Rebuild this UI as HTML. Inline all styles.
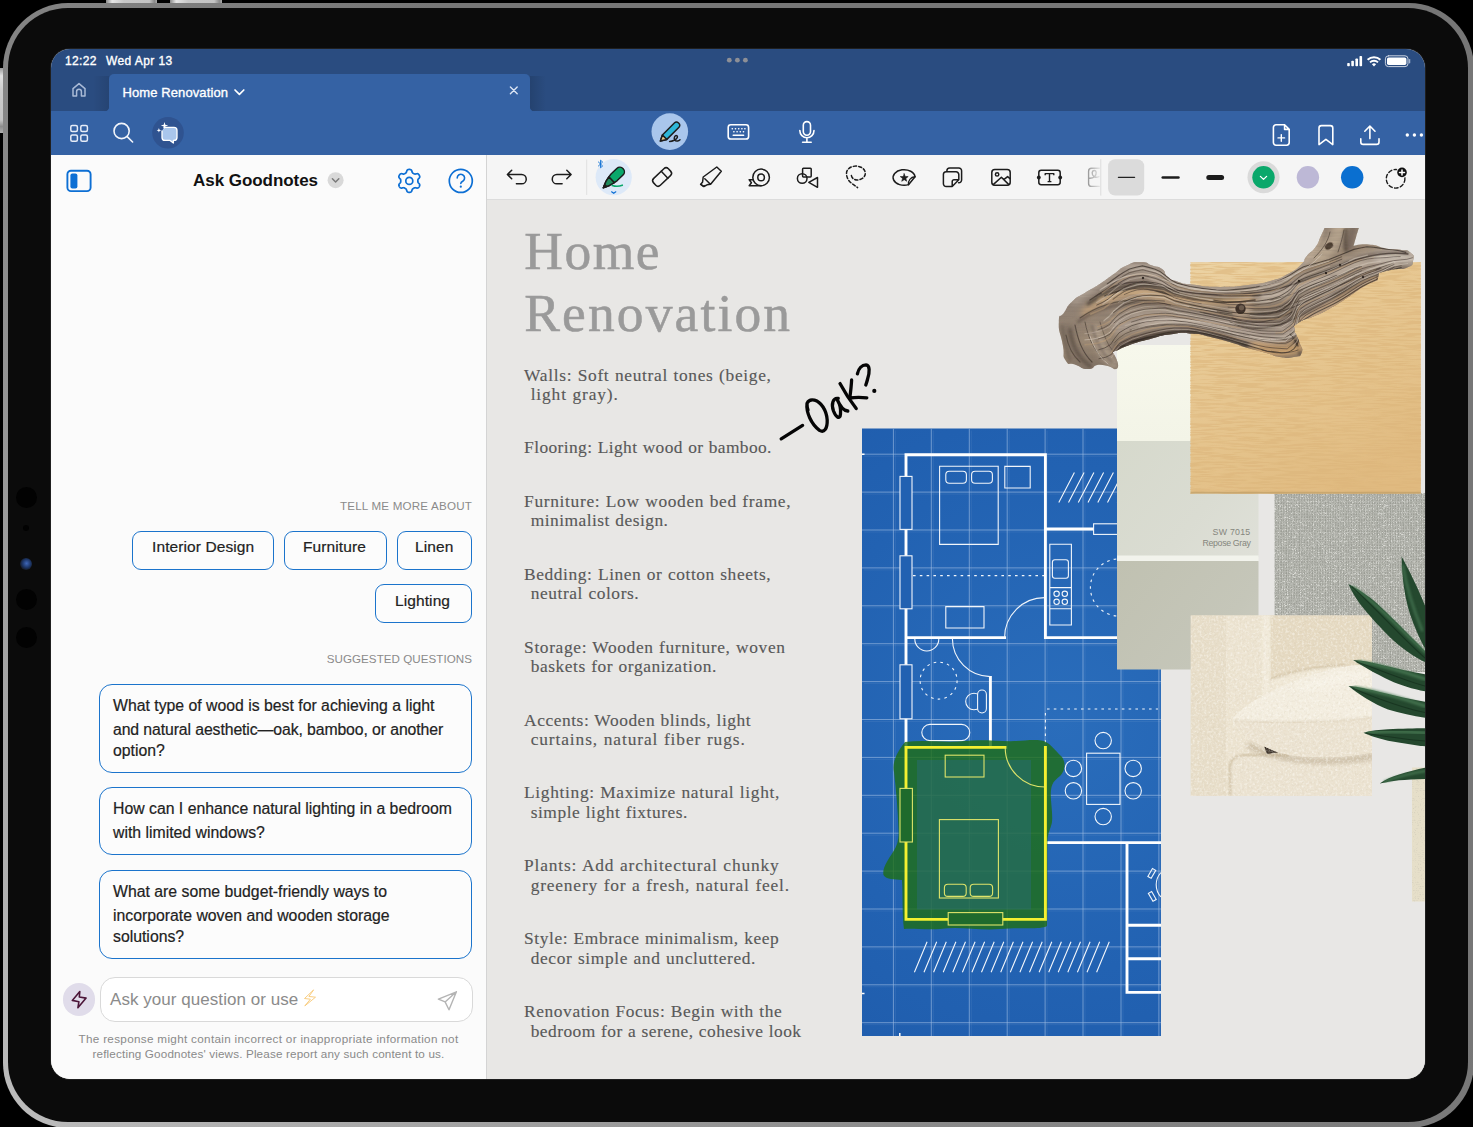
<!DOCTYPE html>
<html>
<head>
<meta charset="utf-8">
<title>Goodnotes</title>
<style>
html,body{margin:0;padding:0;overflow:hidden;}
html{width:1473px;height:1127px;background:#000;}
body{width:1473px;height:1127px;overflow:hidden;background:#000;position:relative;font-family:"Liberation Sans",sans-serif;}
.abs{position:absolute;}
#frame{left:3.100px;top:3.400px;width:1471.400px;height:1124.600px;border-radius:65px;background:linear-gradient(45deg,#bdbdbd 0%,#8a8a8a 35%,#767676 60%,#767676 100%);}
#bezel{left:8.200px;top:8.400px;width:1459.500px;height:1113.400px;border-radius:60px;background:#0b0b0b;}
.btn{background:linear-gradient(90deg,#8a8a8a,#e6e6e6 12%,#c8c8c8 35%,#c4c4c4 85%,#8a8a8a 95%,#aaa 100%);}
#screen{left:51px;top:49px;width:1374.200px;height:1030.400px;border-radius:19px;overflow:hidden;background:#e8e7e5;}
#ring{left:49.900px;top:47.900px;width:1376.400px;height:1032.600px;border-radius:20.200px;background:#1f1f1f;}
/* inside screen coords are page coords minus (51,49) -> use wrapper shift */
#sc{position:absolute;left:-51px;top:-49px;width:1473px;height:1127px;}
#status{left:51px;top:49px;width:1374px;height:62px;background:#2a4c80;}
#tab{left:109px;top:74px;width:421px;height:38px;background:#3562a4;border-radius:5px 5px 0 0;}
#bluebar{left:51px;top:111px;width:1374px;height:44px;background:#3562a4;}
#panel{left:51px;top:155px;width:435px;height:926px;background:#fbfbfb;}
#pdiv{left:486px;top:155px;width:1px;height:926px;background:#d4d4d4;}
#tools{left:487px;top:155px;width:938px;height:44px;background:#f5f5f5;border-bottom:1px solid #dcdcdc;}
#doc{left:487px;top:200px;width:939px;height:881px;background:#e8e7e5;}
.w{color:#fff;}
.sb{-webkit-text-stroke:0.35px currentColor;}
.t{position:absolute;white-space:nowrap;line-height:1;}
.chip{position:absolute;box-sizing:border-box;border:1.5px solid #1b74cc;border-radius:9px;background:#fcfcfc;height:39px;}
.q{position:absolute;box-sizing:border-box;border:1.5px solid #1b74cc;border-radius:13px;background:#fcfcfc;left:99px;width:373px;}
.lbl{font-size:11.6px;color:#8a8a8a;letter-spacing:0.05px;}
.ct{font-size:15.5px;color:#222;-webkit-text-stroke:0.2px #222;letter-spacing:0.1px;}
.qt{font-size:15.8px;color:#222;-webkit-text-stroke:0.2px #222;}
.tt{font-family:"Liberation Serif",serif;font-size:53.5px;color:#9a9a9a;-webkit-text-stroke:0.55px #9a9a9a;}
.bt{font-family:"Liberation Serif",serif;font-size:17.4px;color:#595959;word-spacing:0.5px;-webkit-text-stroke:0.15px #595959;}
</style>
</head>
<body>
<div class="abs btn" style="left:105.500px;top:0;width:51.200px;height:4px;"></div>
<div class="abs btn" style="left:170px;top:0;width:51.800px;height:4px;"></div>
<div class="abs" style="left:0;top:68.200px;width:4px;height:64.800px;background:linear-gradient(180deg,#9a9a9a,#e2e2e2 12%,#cdcdcd 35%,#c4c4c4 80%,#8c8c8c 90%,#b0b0b0 100%);"></div>
<div class="abs" id="frame"></div>
<div class="abs" id="bezel"></div>
<!-- cameras -->
<div class="abs" style="left:16px;top:487px;width:21px;height:21px;border-radius:50%;background:#020202;"></div>
<div class="abs" style="left:23px;top:525px;width:6px;height:6px;border-radius:50%;background:#020202;"></div>
<div class="abs" style="left:20px;top:558px;width:12px;height:12px;border-radius:50%;background:radial-gradient(circle at 55% 45%,#3f67b8 0,#1c3566 45%,#15171c 75%,#0b0b0b 100%);"></div>
<div class="abs" style="left:16px;top:589px;width:21px;height:21px;border-radius:50%;background:#020202;"></div>
<div class="abs" style="left:16px;top:627px;width:21px;height:21px;border-radius:50%;background:#020202;"></div>

<div class="abs" id="ring"></div>
<div class="abs" id="screen"><div id="sc">
<div class="abs" id="status"></div>
<div class="abs" style="left:530px;top:76px;width:16px;height:35px;background:linear-gradient(90deg,rgba(0,0,0,0.13),rgba(0,0,0,0));"></div>
<div class="abs" style="left:93px;top:76px;width:16px;height:35px;background:linear-gradient(270deg,rgba(0,0,0,0.10),rgba(0,0,0,0));"></div>
<div class="abs" id="tab"></div>
<div class="abs" id="bluebar"></div>
<div class="abs" id="panel"></div>
<div class="abs" id="pdiv"></div>
<div class="abs" id="tools"></div>
<div class="abs" id="doc"></div>

<!-- STATUS TEXT -->
<div class="t w sb" style="left:65px;top:54.700px;font-size:12px;letter-spacing:0.35px;">12:22</div>
<div class="t w sb" style="left:106px;top:54.700px;font-size:12px;letter-spacing:0.42px;">Wed Apr 13</div>
<div class="t w sb" style="left:122.500px;top:86px;font-size:13px;letter-spacing:0.1px;">Home Renovation</div>

<!-- PANEL TEXT -->
<div class="t" style="left:193px;top:172px;font-size:17px;font-weight:bold;color:#111;letter-spacing:-0.05px;">Ask Goodnotes</div>
<div class="t lbl" id="l1" style="right:1001px;top:499.600px;letter-spacing:0.2px;">TELL ME MORE ABOUT</div>
<div class="chip" style="left:132px;top:531px;width:142px;"></div>
<div class="chip" style="left:284px;top:531px;width:103px;"></div>
<div class="chip" style="left:397px;top:531px;width:75px;"></div>
<div class="chip" style="left:375px;top:584px;width:97px;"></div>
<div class="t ct" style="left:152px;top:539px;">Interior Design</div>
<div class="t ct" style="left:303px;top:539px;">Furniture</div>
<div class="t ct" style="left:415px;top:539px;">Linen</div>
<div class="t ct" style="left:395px;top:593px;">Lighting</div>
<div class="t lbl" id="l2" style="right:1001px;top:653.100px;">SUGGESTED QUESTIONS</div>
<div class="q" style="top:684px;height:89px;"></div>
<div class="q" style="top:787px;height:68px;"></div>
<div class="q" style="top:869.500px;height:89px;"></div>
<div class="t qt" style="left:113px;top:697.600px;">What type of wood is best for achieving a light</div>
<div class="t qt" style="left:113px;top:721.600px;letter-spacing:-0.1px;">and natural aesthetic—oak, bamboo, or another</div>
<div class="t qt" style="left:113px;top:742.600px;">option?</div>
<div class="t qt" style="left:113px;top:801px;">How can I enhance natural lighting in a bedroom</div>
<div class="t qt" style="left:113px;top:825px;">with limited windows?</div>
<div class="t qt" style="left:113px;top:884px;">What are some budget-friendly ways to</div>
<div class="t qt" style="left:113px;top:908px;">incorporate woven and wooden storage</div>
<div class="t qt" style="left:113px;top:929px;">solutions?</div>
<div class="abs" style="left:100px;top:977px;width:373px;height:45px;box-sizing:border-box;border:1px solid #d9d9d9;border-radius:15px;background:#fff;"></div>
<div class="abs" style="left:62.800px;top:983.200px;width:32.600px;height:32.600px;border-radius:50%;background:#e0dcea;"></div>
<div class="t" style="left:110px;top:990.500px;font-size:17px;color:#8b8b8b;letter-spacing:0.05px;">Ask your question or use</div>
<div class="t" style="left:0;width:537px;text-align:center;top:1032.500px;font-size:11.7px;letter-spacing:0.32px;color:#8a8a8a;">The response might contain incorrect or inappropriate information not</div>
<div class="t" style="left:0;width:537px;text-align:center;top:1047.500px;font-size:11.7px;letter-spacing:0.15px;color:#8a8a8a;">reflecting Goodnotes' views. Please report any such content to us.</div>

<!-- DOC TEXT -->
<div class="t tt" style="left:524.3px;top:224.8px;letter-spacing:1.483px;">Home</div>
<div class="t tt" style="left:524.3px;top:287.2px;letter-spacing:2.127px;">Renovation</div>

<div class="t bt" style="left:524.1px;top:366.6px;letter-spacing:0.677px;">Walls: Soft neutral tones (beige,</div>
<div class="t bt" style="left:530.7px;top:386.4px;letter-spacing:0.854px;">light gray).</div>
<div class="t bt" style="left:524.1px;top:439.3px;letter-spacing:0.402px;">Flooring: Light wood or bamboo.</div>
<div class="t bt" style="left:524.1px;top:492.7px;letter-spacing:0.664px;">Furniture: Low wooden bed frame,</div>
<div class="t bt" style="left:530.7px;top:512.4px;letter-spacing:0.486px;">minimalist design.</div>
<div class="t bt" style="left:524.1px;top:565.6px;letter-spacing:0.580px;">Bedding: Linen or cotton sheets,</div>
<div class="t bt" style="left:530.7px;top:585.3px;letter-spacing:0.573px;">neutral colors.</div>
<div class="t bt" style="left:524.1px;top:638.6px;letter-spacing:0.633px;">Storage: Wooden furniture, woven</div>
<div class="t bt" style="left:530.7px;top:658.3px;letter-spacing:0.562px;">baskets for organization.</div>
<div class="t bt" style="left:524.1px;top:711.5px;letter-spacing:0.542px;">Accents: Wooden blinds, light</div>
<div class="t bt" style="left:530.7px;top:731.2px;letter-spacing:0.882px;">curtains, natural fiber rugs.</div>
<div class="t bt" style="left:524.1px;top:784.4px;letter-spacing:0.655px;">Lighting: Maximize natural light,</div>
<div class="t bt" style="left:530.7px;top:804.1px;letter-spacing:0.538px;">simple light fixtures.</div>
<div class="t bt" style="left:524.1px;top:857.3px;letter-spacing:0.826px;">Plants: Add architectural chunky</div>
<div class="t bt" style="left:530.7px;top:877.0px;letter-spacing:0.809px;">greenery for a fresh, natural feel.</div>
<div class="t bt" style="left:524.1px;top:930.2px;letter-spacing:0.584px;">Style: Embrace minimalism, keep</div>
<div class="t bt" style="left:530.7px;top:949.9px;letter-spacing:0.627px;">decor simple and uncluttered.</div>
<div class="t bt" style="left:524.1px;top:1003.0px;letter-spacing:0.579px;">Renovation Focus: Begin with the</div>
<div class="t bt" style="left:530.7px;top:1022.7px;letter-spacing:0.464px;">bedroom for a serene, cohesive look</div>

<!-- IMAGES -->
<!-- BP START -->
<svg class="abs" style="left:0;top:0;" width="1473" height="1127" viewBox="0 0 1473 1127" fill="none">
<defs><radialGradient id="bpg" cx="1060" cy="720" r="420" gradientUnits="userSpaceOnUse"><stop offset="0" stop-color="#2a6dbb"/><stop offset="0.6" stop-color="#2262b2"/><stop offset="1" stop-color="#1f5cac"/></radialGradient>
<clipPath id="bpc"><rect x="862" y="428.5" width="299" height="607.5"/></clipPath></defs>
<rect x="862" y="428.5" width="299" height="607.5" fill="url(#bpg)"/>
<g clip-path="url(#bpc)">
<path d="M893.4 428.5 V1036 M931.3 428.5 V1036 M969.3 428.5 V1036 M1007.2 428.5 V1036 M1045.1 428.5 V1036 M1083.0 428.5 V1036 M1121.0 428.5 V1036 M1158.9 428.5 V1036 M862 454.2 H1161 M862 492.1 H1161 M862 530.0 H1161 M862 567.9 H1161 M862 605.8 H1161 M862 643.7 H1161 M862 681.6 H1161 M862 719.5 H1161 M862 757.4 H1161 M862 795.3 H1161 M862 833.2 H1161 M862 871.1 H1161 M862 909.0 H1161 M862 946.9 H1161 M862 984.8 H1161 M862 1022.7 H1161" stroke="#9dbce2" stroke-opacity="0.7" stroke-width="0.9"/>
<path d="M893.4 428.5 V1036 M931.3 428.5 V1036 M969.3 428.5 V1036 M1007.2 428.5 V1036 M1045.1 428.5 V1036 M1083.0 428.5 V1036 M1121.0 428.5 V1036 M1158.9 428.5 V1036 M862 454.2 H1161 M862 492.1 H1161 M862 530.0 H1161 M862 567.9 H1161 M862 605.8 H1161 M862 643.7 H1161 M862 681.6 H1161 M862 719.5 H1161 M862 757.4 H1161 M862 795.3 H1161 M862 833.2 H1161 M862 871.1 H1161 M862 909.0 H1161 M862 946.9 H1161 M862 984.8 H1161 M862 1022.7 H1161" stroke="#8fb2dc" stroke-opacity="0.13" stroke-width="1" transform="translate(2 2)"/>
<path d="M906 454.8 H1045.4 M906 454.8 V747 M1045.4 454.8 V637.6 M906 637.6 H1004.6 M1045.4 637.6 H1120 M1045.4 529 H1094 M990.4 677.5 V747 M1046 842.6 H1161 M1127 842.6 V992.4 H1161 M1127 925.2 H1161 M1127 958.8 H1161" stroke="#fff" stroke-width="2.9" stroke-linecap="square"/>
<rect x="900.0" y="476.4" width="12.0" height="53.0" fill="#2261b1" stroke="#f2f6fb" stroke-width="1.1"/>
<rect x="900.0" y="555.8" width="12.0" height="53.0" fill="#2261b1" stroke="#f2f6fb" stroke-width="1.1"/>
<rect x="900.0" y="664.8" width="12.0" height="54.0" fill="#2261b1" stroke="#f2f6fb" stroke-width="1.1"/>
<rect x="1093.6" y="523.8" width="24.0" height="10.6" fill="#2261b1" stroke="#f2f6fb" stroke-width="1.1"/>
<rect x="945.8" y="471.2" width="20.6" height="12.0" rx="3.5" stroke="#f2f6fb" stroke-width="1.1"/>
<rect x="971.6" y="471.2" width="20.8" height="12.0" rx="3.5" stroke="#f2f6fb" stroke-width="1.1"/>
<rect x="1052.4" y="559.8" width="16.0" height="18.4" rx="2.5" stroke="#f2f6fb" stroke-width="1.1"/>
<circle cx="1056.6" cy="593.8" r="2.700" stroke="#f2f6fb" stroke-width="1.1"/>
<circle cx="1064.8" cy="593.8" r="2.700" stroke="#f2f6fb" stroke-width="1.1"/>
<circle cx="1056.6" cy="601.8" r="2.700" stroke="#f2f6fb" stroke-width="1.1"/>
<circle cx="1064.8" cy="601.8" r="2.700" stroke="#f2f6fb" stroke-width="1.1"/>
<circle cx="974" cy="701.500" r="8.300" stroke="#f2f6fb" stroke-width="1.1"/>
<rect x="977.600" y="690" width="8.800" height="23" rx="4.400" fill="#2262b2" stroke="#f2f6fb" stroke-width="1.1"/>
<rect x="921.8" y="724.4" width="48.0" height="16.2" rx="8.1" stroke="#f2f6fb" stroke-width="1.1"/>
<path d="M939.6 466.2 H998.2 V544.4 H939.6 Z M1004.8 466.4 H1030.2 V488.0 H1004.8 Z M945.8 606.6 H984.0 V628.0 H945.8 Z M1049.8 544.2 H1071.4 V625.0 H1049.8 Z M1049.8 587.6 H1071.4 M1049.800 608.8 H1071.4 M1058.8 502.4 L1074.4 472.6 M1068.5 502.4 L1084.1 472.6 M1078.3 502.4 L1093.9 472.6 M1088.0 502.4 L1103.6 472.6 M1097.8 502.4 L1113.4 472.6 M1107.5 502.4 L1123.1 472.6 M1117.3 502.4 L1132.9 472.6 M1004.6 637.6 A40 40 0 0 1 1044.6 597.6 M952.4 638.6 A38 38 0 0 0 990.4 676.6 M914.8 639 A12 12 0 0 0 938.800 639" stroke="#f2f6fb" stroke-width="1.1"/>
<path d="M913 575.600 H1044" stroke="#f2f6fb" stroke-width="1.1" stroke-dasharray="2.600 4.200"/>
<circle cx="938.600" cy="680.600" r="18.500" stroke="#f2f6fb" stroke-width="1.1" stroke-dasharray="2.600 4.200"/>
<circle cx="1119" cy="587.500" r="28.600" stroke="#f2f6fb" stroke-width="1.1" stroke-dasharray="2.600 4.200"/>
<path d="M1047 709 H1158 M1045.400 713 V750" stroke="#f2f6fb" stroke-width="1.1" stroke-dasharray="2.600 4.200"/>
<path d="M905 742 C925 739.500 945 743 965 741 C985 739 1005 742.500 1025 740.500 C1035 739.500 1042 740 1046 742 C1050 744 1054 749 1062 757 C1066 763 1065 770 1061 775 C1057 779 1052 781 1051 790 C1050 800 1053 812 1052 822 C1051 828 1048 832 1047.500 840 C1047 860 1048 900 1047 926 C1040 930 1020 927 1000 929 C980 931 960 926 940 929 C925 930 912 928 904 929 C902 915 903 895 902 880 C895 879 886 880 883.500 875 C882 868 888 860 893 852 C897 846 899 840 898.500 830 C898 810 896 790 894 772 C892 762 897 752 905 742Z" fill="#1e6e14" fill-opacity="0.800"/>
<rect x="917" y="760" width="114" height="149.500" fill="#2d6992" fill-opacity="0.350"/>
<path d="M906 747.400 H1005 M906 747.400 V919.400 H1045.400 V747.400" stroke="#f4f031" stroke-width="2.900" stroke-linecap="square"/>
<path d="M1005.200 747.400 A39.600 39.600 0 0 0 1044.800 787" stroke="#dfe46a" stroke-width="1.100"/>
<rect x="900" y="788.400" width="12.400" height="53.600" fill="#1e6a2c" stroke="#dfe46a" stroke-width="1.100"/>
<rect x="948.200" y="912.600" width="54.600" height="12.400" fill="#1e6a2c" stroke="#dfe46a" stroke-width="1.100"/>
<rect x="945.200" y="755.200" width="38.800" height="21.800" stroke="#dfe46a" stroke-width="1.100"/>
<rect x="939.400" y="819.600" width="59" height="78.400" stroke="#dfe46a" stroke-width="1.100"/>
<rect x="944.400" y="884.200" width="21.800" height="12.200" rx="3.500" stroke="#dfe46a" stroke-width="1.100"/>
<rect x="970.200" y="884.200" width="22.400" height="12.200" rx="3.500" stroke="#dfe46a" stroke-width="1.100"/>
<rect x="1086.600" y="753.200" width="33.400" height="51.200" stroke="#f2f6fb" stroke-width="1.1"/>
<circle cx="1103.2" cy="740.6" r="8.200" stroke="#f2f6fb" stroke-width="1.1"/>
<circle cx="1103.2" cy="816.6" r="8.200" stroke="#f2f6fb" stroke-width="1.1"/>
<circle cx="1073.4" cy="768.4" r="8.200" stroke="#f2f6fb" stroke-width="1.1"/>
<circle cx="1073.4" cy="790.8" r="8.200" stroke="#f2f6fb" stroke-width="1.1"/>
<circle cx="1133.2" cy="768.4" r="8.200" stroke="#f2f6fb" stroke-width="1.1"/>
<circle cx="1133.2" cy="790.8" r="8.200" stroke="#f2f6fb" stroke-width="1.1"/>
<path d="M914.4 972.2 L927.1 941.8 M924.0 972.2 L936.7 941.8 M933.6 972.2 L946.3 941.8 M943.2 972.2 L955.9 941.8 M952.8 972.2 L965.5 941.8 M962.4 972.2 L975.1 941.8 M971.9 972.2 L984.6 941.8 M981.5 972.2 L994.2 941.8 M991.1 972.2 L1003.8 941.8 M1000.7 972.2 L1013.4 941.8 M1010.3 972.2 L1023.0 941.8 M1019.9 972.2 L1032.6 941.8 M1029.5 972.2 L1042.2 941.8 M1039.1 972.2 L1051.8 941.8 M1048.7 972.2 L1061.4 941.8 M1058.2 972.2 L1071.0 941.8 M1067.8 972.2 L1080.5 941.8 M1077.4 972.2 L1090.1 941.8 M1087.0 972.2 L1099.7 941.8 M1096.6 972.2 L1109.3 941.8" stroke="#f2f6fb" stroke-width="1.1"/>
<g stroke="#f2f6fb" stroke-width="1.1"><rect x="-1.900" y="-4.600" width="3.800" height="9.200" transform="translate(1151.800 873.400) rotate(30)"/><rect x="-1.900" y="-4.600" width="3.800" height="9.200" transform="translate(1152.300 896.400) rotate(-30)"/><path d="M1161 872.500 A18 18 0 0 0 1161 897"/></g>
<path d="M862 993.600 H864.500 M899.800 1033 V1036 M862 454.200 H864.500" stroke="#fff" stroke-width="1.500"/>
</g></svg>
<!-- BP END -->
<!-- IMGS START -->
<svg class="abs" style="left:0;top:0;" width="1473" height="1127" viewBox="0 0 1473 1127" fill="none">
<defs>
<filter id="fGrain" x="0" y="0" width="100%" height="100%"><feTurbulence type="fractalNoise" baseFrequency="0.042 0.55" numOctaves="2" seed="7" result="n"/><feColorMatrix in="n" type="matrix" values="0 0 0 0 0.72  0 0 0 0 0.47  0 0 0 0 0.2  6.5 0 0 0 -2.85"/></filter>
<filter id="fGrain2" x="0" y="0" width="100%" height="100%"><feTurbulence type="fractalNoise" baseFrequency="0.008 0.04" numOctaves="2" seed="3" result="n"/><feColorMatrix in="n" type="matrix" values="0 0 0 0 0.8  0 0 0 0 0.56  0 0 0 0 0.28  2.4 0 0 0 -1.1"/></filter>
<filter id="fLinen" x="0" y="0" width="100%" height="100%"><feTurbulence type="turbulence" baseFrequency="0.55 0.75" numOctaves="2" seed="11" result="n"/><feColorMatrix in="n" type="matrix" values="0 0 0 0 1  0 0 0 0 1  0 0 0 0 0.97  2.2 0 0 0 -0.55"/></filter>
<filter id="fLinenD" x="0" y="0" width="100%" height="100%"><feTurbulence type="turbulence" baseFrequency="0.7 0.5" numOctaves="2" seed="5" result="n"/><feColorMatrix in="n" type="matrix" values="0 0 0 0 0.3  0 0 0 0 0.3  0 0 0 0 0.28  1.8 0 0 0 -0.5"/></filter>
<filter id="fBoucle" x="0" y="0" width="100%" height="100%"><feTurbulence type="fractalNoise" baseFrequency="0.42" numOctaves="2" seed="4" result="n"/><feColorMatrix in="n" type="matrix" values="0 0 0 0 1  0 0 0 0 0.99  0 0 0 0 0.95  2.4 0 0 0 -1.05"/></filter>
<filter id="fBoucleD" x="0" y="0" width="100%" height="100%"><feTurbulence type="fractalNoise" baseFrequency="0.38" numOctaves="2" seed="9" result="n"/><feColorMatrix in="n" type="matrix" values="0 0 0 0 0.62  0 0 0 0 0.54  0 0 0 0 0.4  1.8 0 0 0 -0.95"/></filter>
<filter id="blur2"><feGaussianBlur stdDeviation="2"/></filter>
<filter id="blur4"><feGaussianBlur stdDeviation="4"/></filter>
<filter id="blur1"><feGaussianBlur stdDeviation="0.8"/></filter>
<linearGradient id="gCream" x1="0" y1="345" x2="0" y2="441" gradientUnits="userSpaceOnUse"><stop offset="0" stop-color="#f7f8ec"/><stop offset="1" stop-color="#f3f4e7"/></linearGradient>
<linearGradient id="gSw2" x1="1117" y1="441" x2="1258" y2="557" gradientUnits="userSpaceOnUse"><stop offset="0" stop-color="#d6d9cc"/><stop offset="0.6" stop-color="#dadcd2"/><stop offset="1" stop-color="#dfe0d8"/></linearGradient>
<linearGradient id="gSw3" x1="1117" y1="561" x2="1258" y2="669" gradientUnits="userSpaceOnUse"><stop offset="0" stop-color="#c0c1b1"/><stop offset="0.7" stop-color="#c5c6b9"/><stop offset="1" stop-color="#cbcbc0"/></linearGradient>
<linearGradient id="gOak" x1="1200" y1="262" x2="1330" y2="494" gradientUnits="userSpaceOnUse"><stop offset="0" stop-color="#ecd3a4"/><stop offset="0.3" stop-color="#e8ca96"/><stop offset="0.7" stop-color="#e4c28a"/><stop offset="1" stop-color="#e0ba80"/></linearGradient>
<pattern id="pWeave" width="2.600" height="2.800" patternUnits="userSpaceOnUse"><rect width="3" height="3" fill="#abada5"/><rect x="0" y="0" width="1.300" height="3" fill="#bbbcb5"/><rect x="0" y="0" width="3" height="1.100" fill="#b4b5ae" opacity="0.700"/><rect x="1.300" y="1.100" width="1.300" height="1.700" fill="#989a92"/></pattern>
<clipPath id="cCush"><rect x="1190.800" y="615.500" width="181.200" height="180.200"/></clipPath>
<clipPath id="cScr"><rect x="1040" y="200" width="385" height="879"/></clipPath>
</defs>
<rect x="1117" y="345" width="141" height="97" fill="url(#gCream)"/>
<rect x="1117" y="441" width="141.500" height="116" fill="url(#gSw2)"/>
<rect x="1117" y="555.500" width="141.500" height="6" fill="#f2f3ec"/>
<rect x="1117" y="561" width="141.500" height="108.500" fill="url(#gSw3)"/>
<rect x="1274.500" y="493" width="150.500" height="179" fill="url(#pWeave)"/>
<rect x="1274.500" y="493" width="150.500" height="179" filter="url(#fLinen)" opacity="0.6"/>
<rect x="1274.500" y="493" width="150.500" height="179" filter="url(#fLinenD)" opacity="0.6"/>
<rect x="1190.600" y="262.200" width="230.200" height="231.400" fill="url(#gOak)"/>
<rect x="1190.600" y="262.200" width="230.200" height="231.400" filter="url(#fGrain)" opacity="0.6"/>
<rect x="1190.600" y="262.200" width="230.200" height="231.400" filter="url(#fGrain2)" opacity="0.4"/>
<rect x="1190.600" y="491.800" width="230.200" height="1.800" fill="#b99a63" opacity="0.6"/>
<rect x="1412" y="767.500" width="13" height="134" fill="#e6dfc9"/>
<rect x="1412" y="767.500" width="13" height="134" filter="url(#fLinenD)" opacity="0.25"/>
<g clip-path="url(#cCush)">
<rect x="1190" y="615" width="183" height="182" fill="#eae0cc"/>
<rect x="1190" y="615" width="36" height="182" fill="#e7ddc8"/>
<rect x="1226" y="615" width="45" height="182" fill="#ece3d0"/>
<path d="M1225.600 615 V796" stroke="#cfc0a4" stroke-width="1.600" filter="url(#blur1)"/>
<path d="M1229 615 V796" stroke="#f6f0e2" stroke-width="2.500" opacity="0.800" filter="url(#blur1)"/>
<path d="M1270.500 615 H1373 V672 C1340 664 1300 672 1271 690 Z" fill="#e5d9c1"/>
<path d="M1272 615 V690" stroke="#bfae90" stroke-width="2.400" filter="url(#blur1)"/>
<path d="M1262 615 H1269.500 V700 H1262Z" fill="#f3ecdc" opacity="0.800" filter="url(#blur1)"/>
<path d="M1271 679 C1290 672 1315 667 1345 665 L1300 692 L1271 705Z" fill="#f0e8d6"/>
<path d="M1271 679 C1290 672 1315 667 1345 665" stroke="#cdbd9f" stroke-width="1.600" filter="url(#blur1)"/>
<path d="M1230 796 V766 C1231 758 1236 755 1246 755 L1373 753 V797Z" fill="#ebe2d0"/>
<path d="M1230 796 V766 C1231 758 1236 755 1246 755 L1290 755" stroke="#cbbb9d" stroke-width="1.800" filter="url(#blur1)"/>
<path d="M1250 742 C1280 760 1330 762 1373 753 V760 C1330 767 1285 766 1246 748Z" fill="#b3a286" opacity="0.550" filter="url(#blur2)"/>
<path d="M1264 746 L1278 752.500 L1267 754Z" fill="#3d332a"/>
<path d="M1232 719.500 C1246 700 1290 680 1335 668 C1350 665 1364 664 1373 665 V752 C1345 758 1310 758 1290 755 C1266 750 1238 735 1232 719.500Z" fill="#f3eddf"/>
<path d="M1233 720.500 C1270 723 1330 723 1373 717 V752 C1345 758 1310 758 1290 755 C1266 750 1238 735 1233 720.500Z" fill="#ebe2d0"/>
<path d="M1233 720.500 C1270 723 1330 723 1373 717" stroke="#d9ccb4" stroke-width="1.200" filter="url(#blur1)"/>
<path d="M1300 690 C1320 682 1345 676 1373 673" stroke="#faf6ec" stroke-width="9" opacity="0.600" filter="url(#blur4)"/>
<rect x="1190" y="615" width="183" height="182" filter="url(#fBoucle)" opacity="0.5"/>
<rect x="1190" y="615" width="183" height="182" filter="url(#fBoucleD)" opacity="0.4"/>
</g>
</svg>
<!-- IMGS END -->

<!-- DRIFT START -->
<svg class="abs" style="left:0;top:0;" width="1473" height="1127" viewBox="0 0 1473 1127" fill="none" stroke-linecap="round">
<defs><clipPath id="cDrift"><path d="M1058.8 322.2 C1059.3 311.3 1059.6 319.4 1064.2 312.3 C1068.8 305.2 1065.6 307.5 1072.7 300.9 C1079.8 294.3 1076.5 298.1 1085.5 292.4 C1094.5 286.7 1090.2 290.1 1099.7 283.9 C1109.2 277.7 1104.9 280.1 1113.9 273.9 C1122.9 267.7 1117.6 269.4 1126.6 265.4 C1135.6 261.4 1132.3 261.9 1140.8 261.9 C1149.3 261.9 1145.1 263.0 1152.2 265.4 C1159.3 267.8 1156.9 265.2 1162.1 269.0 C1167.3 272.8 1162.6 272.6 1167.8 276.8 C1173.0 281.0 1169.7 279.1 1177.8 281.7 C1185.9 284.3 1177.8 282.9 1192.0 284.6 C1206.2 286.3 1200.5 286.9 1220.3 286.9 C1240.1 286.9 1233.9 286.8 1251.3 284.6 C1268.7 282.4 1260.8 283.6 1272.6 280.3 C1284.4 277.0 1277.3 279.8 1286.8 274.6 C1296.3 269.4 1294.4 270.8 1301.0 264.7 C1307.6 258.6 1301.9 261.9 1306.6 256.2 C1311.3 250.5 1310.5 254.2 1315.2 247.6 C1319.9 241.0 1317.7 242.8 1320.8 236.3 C1323.9 229.8 1324.4 228.1 1324.4 228.1 C1324.4 228.1 1358.9 228.1 1358.9 228.1 C1358.9 228.1 1358.1 230.3 1356.3 236.3 C1354.5 242.3 1353.5 246.2 1353.5 246.2 C1353.5 246.2 1358.2 243.8 1369.1 244.5 C1380.0 245.2 1375.7 246.6 1386.1 248.4 C1396.5 250.2 1392.2 248.4 1400.3 249.8 C1408.4 251.2 1406.0 249.1 1410.3 252.6 C1414.6 256.1 1414.1 255.4 1413.1 260.4 C1412.1 265.4 1414.0 264.4 1407.4 267.5 C1400.8 270.6 1402.7 267.7 1393.2 269.6 C1383.7 271.5 1379.0 273.2 1379.0 273.2 C1379.0 273.2 1377.6 280.3 1377.6 280.3 C1377.6 280.3 1372.4 282.0 1364.8 286.0 C1357.2 290.0 1362.0 287.7 1354.9 292.4 C1347.8 297.1 1352.1 294.8 1343.6 300.2 C1335.1 305.6 1338.9 303.5 1329.4 308.7 C1319.9 313.9 1325.6 311.1 1315.2 315.8 C1304.8 320.5 1305.0 318.2 1298.1 322.9 C1291.2 327.6 1295.1 325.7 1294.6 330.0 C1294.1 334.3 1295.0 331.4 1296.7 335.7 C1298.4 340.0 1297.9 337.1 1299.6 342.8 C1301.3 348.5 1303.6 348.0 1301.7 352.7 C1299.8 357.4 1301.2 355.6 1293.9 357.0 C1286.6 358.4 1289.2 358.4 1279.7 357.0 C1270.2 355.6 1277.3 356.0 1265.5 352.7 C1253.7 349.4 1254.5 350.1 1244.2 347.0 C1233.9 343.9 1244.8 346.6 1234.5 343.5 C1224.2 340.4 1227.4 341.1 1213.2 337.8 C1199.0 334.5 1206.2 334.8 1192.0 333.6 C1177.8 332.4 1184.9 332.4 1170.7 334.3 C1156.5 336.2 1163.1 335.7 1149.4 339.2 C1135.7 342.7 1140.4 341.1 1129.5 344.9 C1118.6 348.7 1122.4 348.2 1116.7 350.6 C1111.0 353.0 1112.5 352.0 1112.5 352.0 C1112.5 352.0 1117.6 359.1 1118.1 364.8 C1118.6 370.5 1113.9 369.0 1113.9 369.0 C1113.9 369.0 1108.2 364.8 1099.7 364.8 C1091.2 364.8 1096.4 369.0 1088.3 369.0 C1080.2 369.0 1083.1 367.6 1075.5 364.8 C1067.9 362.0 1069.8 367.1 1065.6 360.5 C1061.4 353.9 1065.1 357.7 1062.8 344.9 C1060.5 332.1 1058.3 333.1 1058.8 322.2Z"/></clipPath>
<linearGradient id="gDrift" x1="1060" y1="250" x2="1100" y2="370" gradientUnits="userSpaceOnUse"><stop offset="0" stop-color="#9c8f83"/><stop offset="0.45" stop-color="#8f8073"/><stop offset="0.75" stop-color="#9a8874"/><stop offset="1" stop-color="#7d6e60"/></linearGradient>
<filter id="fDrift" x="0" y="0" width="100%" height="100%"><feTurbulence type="fractalNoise" baseFrequency="0.02 0.35" numOctaves="3" seed="2" result="n"/><feColorMatrix in="n" type="matrix" values="0 0 0 0 0.2  0 0 0 0 0.16  0 0 0 0 0.13  2.2 0 0 0 -0.9"/></filter>
<filter id="b15"><feGaussianBlur stdDeviation="1.5"/></filter><filter id="b3"><feGaussianBlur stdDeviation="3"/></filter><filter id="b06"><feGaussianBlur stdDeviation="0.6"/></filter>
</defs>
<g clip-path="url(#cDrift)">
<rect x="1050" y="220" width="375" height="160" fill="url(#gDrift)"/>
<g filter="url(#b3)">
<path d="M1075 300 C1105 275 1130 262 1150 268 C1165 274 1180 284 1220 290 C1260 290 1295 275 1312 255" stroke="#b5a79a" stroke-width="9" opacity="0.800"/>
<path d="M1085 312 C1110 295 1130 290 1160 296 C1200 305 1230 300 1262 296" stroke="#c7a47c" stroke-width="7"/>
<path d="M1262 296 C1290 292 1320 280 1345 268 C1365 258 1390 255 1410 256" stroke="#b9aa9b" stroke-width="14"/>
<path d="M1380 258 C1395 256 1405 257 1412 259" stroke="#cfc4b8" stroke-width="12"/>
<path d="M1120 325 C1160 312 1200 318 1240 330 C1270 338 1290 335 1330 305" stroke="#ab9c8f" stroke-width="18"/>
<path d="M1118 350 C1140 338 1165 332 1195 332" stroke="#5b4e45" stroke-width="9"/>
<path d="M1068 330 C1070 345 1075 358 1090 366" stroke="#857668" stroke-width="14"/>
<path d="M1095 330 C1098 345 1104 356 1114 364" stroke="#b5a492" stroke-width="9"/>
<path d="M1255 346 C1275 352 1290 352 1300 346" stroke="#c49c6c" stroke-width="11"/>
<path d="M1300 322 C1330 308 1355 292 1378 278" stroke="#c2a079" stroke-width="6"/>
<path d="M1340 228 C1336 240 1328 250 1318 258" stroke="#b8a68f" stroke-width="14"/>
<path d="M1352 228 C1350 236 1349 242 1349 248" stroke="#6f6156" stroke-width="7"/>
<circle cx="1241" cy="309" r="10" fill="#b8a087"/>
</g>
<g filter="url(#b15)">
<path d="M1088 304 C1112 286 1136 281 1160 289 C1192 300 1228 300 1260 295" stroke="#3b312a" stroke-width="3.2" opacity="0.75"/>
<path d="M1078 322 C1100 306 1126 301 1152 304 C1182 309 1212 316 1234 318" stroke="#4a3e35" stroke-width="2.6" opacity="0.6"/>
<path d="M1236 322 C1256 332 1276 328 1298 316 C1322 304 1350 288 1378 274" stroke="#463a32" stroke-width="2.6" opacity="0.65"/>
<path d="M1264 292 C1292 286 1322 272 1352 260 C1372 252 1394 251 1408 253" stroke="#4a3e35" stroke-width="2.4" opacity="0.6"/>
<path d="M1122 348 C1142 338 1166 333 1196 333 C1215 334 1232 340 1246 345" stroke="#40352d" stroke-width="5.5" opacity="0.8"/>
<path d="M1070 330 C1072 346 1078 358 1090 366" stroke="#4a3e35" stroke-width="4" opacity="0.55"/>
<path d="M1092 326 C1096 342 1102 354 1112 362" stroke="#4a3e35" stroke-width="2.5" opacity="0.5"/>
<path d="M1062 326 C1064 338 1066 350 1070 360" stroke="#5a4d43" stroke-width="3" opacity="0.5"/>
<path d="M1346 230 C1345 238 1345 244 1346 250" stroke="#4e4138" stroke-width="4" opacity="0.7"/>
<path d="M1292 332 C1295 340 1298 348 1300 354" stroke="#3b312a" stroke-width="2.5" opacity="0.7"/>
<path d="M1100 300 C1125 290 1145 290 1165 296 C1195 304 1225 302 1250 298" stroke="#cfae84" stroke-width="3" opacity="0.85"/>
<path d="M1150 278 C1168 288 1190 292 1225 293" stroke="#c4b6a8" stroke-width="3" opacity="0.7"/>
<path d="M1128 268 C1140 266 1150 270 1160 276" stroke="#b3a598" stroke-width="4" opacity="0.7"/>
<path d="M1140 326 C1170 318 1205 322 1235 334 C1260 342 1282 340 1296 332" stroke="#bcae9f" stroke-width="4" opacity="0.7"/>
<path d="M1296 306 C1326 294 1358 276 1398 264" stroke="#c6b9ab" stroke-width="4" opacity="0.7"/>
<path d="M1322 232 C1320 242 1314 252 1306 260" stroke="#c4b098" stroke-width="4" opacity="0.7"/>
<path d="M1258 350 C1274 354 1290 353 1299 348" stroke="#cfa673" stroke-width="4" opacity="0.8"/>
<path d="M1304 320 C1332 306 1356 292 1376 280" stroke="#c9a47a" stroke-width="2.5" opacity="0.7"/>
</g>
<g stroke="#3d332c" filter="url(#b06)">
<path d="M1090 300 C1115 282 1135 278 1160 286 C1190 296 1230 296 1262 292 C1290 288 1320 274 1350 262 C1370 254 1392 252 1408 254" stroke-width="1.3" opacity="0.75"/>
<path d="M1105 296 C1125 287 1140 286 1160 292 C1195 303 1225 305 1255 300" stroke-width="1.6" opacity="0.8"/>
<path d="M1080 318 C1100 304 1125 298 1150 301 C1180 306 1210 312 1232 314" stroke-width="1.1" opacity="0.6"/>
<path d="M1250 314 C1275 318 1300 305 1330 290 C1350 280 1368 274 1380 268" stroke-width="1.2" opacity="0.7"/>
<path d="M1232 318 C1250 326 1272 322 1292 312" stroke-width="1.5" opacity="0.8"/>
<path d="M1230 322 C1250 332 1270 330 1296 318" stroke-width="1.0" opacity="0.6"/>
<path d="M1200 312 C1215 316 1225 318 1236 320" stroke-width="1.1" opacity="0.6"/>
<path d="M1130 330 C1160 322 1190 322 1225 332 C1250 340 1275 342 1296 338" stroke-width="1.0" opacity="0.5"/>
<path d="M1270 300 C1300 294 1330 280 1360 266" stroke-width="0.9" opacity="0.55"/>
<path d="M1280 308 C1310 298 1340 284 1370 272" stroke-width="0.9" opacity="0.5"/>
<path d="M1075 325 C1078 340 1082 352 1092 362" stroke-width="1.2" opacity="0.7"/>
<path d="M1085 322 C1088 338 1094 350 1104 360" stroke-width="1.0" opacity="0.6"/>
<path d="M1066 335 C1068 346 1072 355 1080 362" stroke-width="1.2" opacity="0.6"/>
<path d="M1100 322 C1104 336 1108 346 1114 352" stroke-width="0.9" opacity="0.5"/>
<path d="M1120 346 C1140 338 1160 334 1185 334" stroke-width="1.4" opacity="0.7"/>
<path d="M1330 232 C1328 242 1322 250 1314 258" stroke-width="1.0" opacity="0.6"/>
<path d="M1344 230 C1342 240 1340 246 1338 252" stroke-width="1.0" opacity="0.6"/>
<path d="M1290 334 C1294 338 1296 342 1298 346" stroke-width="1.2" opacity="0.7"/>
<path d="M1262 350 C1275 354 1288 354 1298 350" stroke-width="1.0" opacity="0.6"/>
</g>
<g filter="url(#b06)">
<path d="M1107.3 283.9 Q1112.6 279.9 1118.0 276.0 Q1123.6 272.1 1129.6 269.0 Q1136.0 267.1 1142.4 265.9 Q1148.8 267.4 1155.1 269.2 Q1161.4 271.2 1165.8 275.8 Q1170.6 280.1 1176.7 283.1 Q1183.1 285.0 1189.7 286.6 Q1196.3 287.7 1203.0 288.5 Q1209.7 289.3 1216.4 290.0 Q1223.0 290.4 1229.7 290.0 Q1236.3 289.5 1242.8 288.9 Q1249.4 288.2 1255.9 287.1 Q1262.4 285.6 1268.9 284.2 Q1275.2 282.3 1281.3 279.7 Q1287.2 277.2 1292.5 273.4 Q1297.8 269.7 1303.6 266.8 Q1309.9 265.1 1316.3 263.3 Q1322.7 261.4 1329.1 259.5 Q1335.3 257.1 1341.5 254.6 Q1347.7 252.0 1353.8 249.4 Q1360.4 248.0 1366.9 246.7 Q1373.4 247.0 1379.9 248.1 Q1386.3 249.4 1392.9 249.8 Q1399.5 250.5 1405.9 252.4" stroke="#2f2621" stroke-width="1.1" opacity="0.70"/>
<path d="M1129.6 271.2 Q1136.1 269.3 1142.6 268.2 Q1149.0 269.7 1155.3 271.4 Q1161.6 273.4 1166.1 278.0 Q1171.1 282.3 1177.2 285.2 Q1183.7 287.1 1190.3 288.6 Q1197.0 289.8 1203.6 290.5 Q1210.3 291.2 1217.0 291.9 Q1223.6 292.2 1230.2 291.8 Q1236.8 291.2 1243.3 290.7 Q1249.9 290.1 1256.5 289.1 Q1263.0 287.8 1269.5 286.6 Q1275.9 284.8 1282.0 282.2 Q1287.7 279.6 1292.8 275.8 Q1297.9 272.0 1303.7 269.1 Q1310.1 267.2 1316.4 265.3 Q1322.8 263.3 1329.2 261.2" stroke="#d9cdbf" stroke-width="1.1" opacity="0.55"/>
<path d="M1096.4 295.7 Q1102.2 292.4 1107.6 288.3 Q1112.7 283.9 1118.1 279.7 Q1123.7 275.7 1129.7 272.6 Q1136.2 270.7 1142.7 269.7 Q1149.1 271.3 1155.5 273.1 Q1161.8 275.2 1166.4 279.7 Q1171.4 283.9 1177.6 286.7 Q1184.1 288.6 1190.7 290.1 Q1197.4 291.1 1204.0 291.8 Q1210.7 292.4 1217.3 293.0 Q1223.9 293.2 1230.5 292.8 Q1237.1 292.3 1243.7 291.8 Q1250.3 291.4 1256.9 290.5 Q1263.4 289.4 1270.1 288.4 Q1276.4 286.7 1282.5 284.2 Q1288.1 281.5 1293.0 277.6 Q1297.9 273.7 1303.8 270.7 Q1310.1 268.6 1316.5 266.5 Q1322.9 264.4 1329.2 262.1 Q1335.4 259.5 1341.6 256.8" stroke="#4a3d34" stroke-width="1.1" opacity="0.60"/>
<path d="M1102.2 292.9 Q1107.6 289.3 1112.8 285.5 Q1118.2 281.9 1123.8 278.5 Q1129.8 275.9 1136.4 274.4 Q1142.9 273.4 1149.3 274.7 Q1155.7 276.1 1162.0 277.6 Q1166.7 281.4 1171.7 285.0 Q1177.7 287.3 1184.2 288.9 Q1190.7 290.1 1197.4 291.1 Q1204.1 291.9 1210.8 292.7 Q1217.5 293.7 1224.2 294.4 Q1231.0 294.5 1237.7 294.6 Q1244.4 294.6 1251.2 294.5 Q1257.8 293.8 1264.4 292.7 Q1270.9 291.5 1277.1 289.2 Q1283.1 286.1 1288.4 282.7 Q1293.1 278.3 1298.0 274.0 Q1303.8 270.8 1310.1 268.6 Q1316.5 266.6 1322.9 264.7 Q1329.3 262.8 1335.5 260.5" stroke="#b99b78" stroke-width="1.2" opacity="0.55"/>
<path d="M1118.2 283.6 Q1123.8 279.9 1129.9 277.3 Q1136.4 275.9 1143.0 275.2 Q1149.4 276.8 1155.9 278.6 Q1162.3 280.4 1167.1 284.4 Q1172.3 288.0 1178.5 290.3 Q1185.0 291.9 1191.6 293.1 Q1198.2 293.9 1204.8 294.4 Q1211.4 294.9 1218.1 295.5 Q1224.7 295.9 1231.4 295.8 Q1238.1 295.7 1244.8 295.7 Q1251.5 295.8 1258.3 295.4 Q1265.0 294.8 1271.7 294.2 Q1278.0 292.3 1284.0 289.5 Q1289.1 286.2 1293.5 281.8 Q1298.1 277.4 1304.0 274.0 Q1310.3 271.5 1316.6 269.1 Q1323.0 266.8 1329.4 264.4 Q1335.6 261.8 1341.8 259.2" stroke="#3a2f29" stroke-width="0.9" opacity="0.65"/>
<path d="M1096.7 302.4 Q1102.6 299.1 1107.9 295.0 Q1112.9 290.3 1118.2 286.1 Q1123.9 282.3 1130.0 279.5 Q1136.5 278.0 1143.1 277.2 Q1149.6 278.7 1156.0 280.3 Q1162.5 282.1 1167.4 286.0 Q1172.7 289.6 1178.9 292.0 Q1185.5 293.5 1192.1 294.8 Q1198.7 295.7 1205.4 296.3 Q1212.0 296.8 1218.6 297.4 Q1225.3 297.8 1231.9 297.7 Q1238.6 297.6 1245.3 297.6 Q1252.0 297.6 1258.8 297.2 Q1265.5 296.6 1272.2 296.1 Q1278.5 294.2 1284.5 291.4 Q1289.4 288.1 1293.7 283.6 Q1298.2 279.2 1304.1 275.9 Q1310.4 273.4 1316.7 271.0 Q1323.1 268.6 1329.5 266.2" stroke="#c9bcae" stroke-width="1.2" opacity="0.50"/>
<path d="M1096.8 305.1 Q1102.8 302.6 1108.2 299.1 Q1113.1 294.9 1118.3 290.9 Q1124.1 287.3 1130.2 284.5 Q1136.7 282.6 1143.3 281.3 Q1149.8 282.1 1156.3 283.0 Q1162.7 284.0 1167.6 287.4 Q1172.9 290.6 1179.1 292.8" stroke="#2f2621" stroke-width="0.9" opacity="0.70"/>
<path d="M1213.0 300.1 Q1219.8 301.1 1226.5 301.9 Q1233.2 302.0 1239.9 302.0 Q1246.5 301.9 1253.2 301.7 Q1259.8 301.0 1266.4 299.9 Q1273.0 299.0 1279.2 296.5 Q1285.1 293.4 1289.8 289.9 Q1293.9 285.4 1298.3 281.1 Q1304.2 278.1 1310.5 275.9 Q1316.9 273.8 1323.3 271.7 Q1329.7 269.5 1335.9 266.9 Q1342.1 264.1 1348.3 261.1" stroke="#2f2621" stroke-width="0.9" opacity="0.70"/>
<path d="M1102.9 304.0 Q1108.3 300.5 1113.1 296.3 Q1118.4 292.5 1124.1 289.1 Q1130.2 286.4 1136.8 284.8 Q1143.4 283.7 1150.0 284.5 Q1156.5 285.4 1162.9 286.3 Q1167.9 289.4 1173.3 292.4 Q1179.5 294.3 1186.1 295.7 Q1192.7 297.0 1199.4 298.1 Q1206.2 299.0 1213.0 300.1" stroke="#d9cdbf" stroke-width="1.2" opacity="0.55"/>
<path d="M1246.7 302.6 Q1253.4 302.6 1260.1 302.2 Q1266.9 301.6 1273.6 301.1 Q1279.9 299.0 1285.8 296.0 Q1290.3 292.5 1294.2 288.0 Q1298.4 283.6 1304.3 280.3 Q1310.6 277.8 1317.0 275.4 Q1323.4 272.9 1329.7 270.4 Q1335.9 267.5 1342.1 264.5 Q1348.3 261.5 1354.4 258.6 Q1360.9 256.7 1367.4 255.1" stroke="#d9cdbf" stroke-width="1.2" opacity="0.55"/>
<path d="M1113.2 299.3 Q1118.4 295.1 1124.2 291.5 Q1130.3 288.5 1136.9 286.6 Q1143.5 285.1 1150.0 285.7 Q1156.6 286.4 1163.0 287.3 Q1168.1 290.5 1173.5 293.5 Q1179.9 295.6 1186.5 297.2 Q1193.2 298.7 1200.0 299.9 Q1206.8 301.0 1213.6 302.2 Q1220.4 303.3 1227.2 304.3 Q1234.0 304.6 1240.7 304.9 Q1247.4 305.1 1254.1 305.1 Q1260.8 304.4 1267.4 303.5 Q1274.0 302.5 1280.1 299.8 Q1285.9 296.4 1290.3 292.5 Q1294.2 287.8 1298.4 283.3 Q1304.3 280.2 1310.6 277.9 Q1317.0 275.8 1323.4 273.7 Q1329.8 271.5 1336.0 268.9 Q1342.2 266.1 1348.4 263.2 Q1354.5 260.3 1361.0 258.2" stroke="#4a3d34" stroke-width="1.2" opacity="0.60"/>
<path d="M1090.9 314.1 Q1097.0 311.4 1103.2 308.8 Q1108.5 305.1 1113.3 300.7 Q1118.4 296.7 1124.2 293.4 Q1130.4 290.9 1137.0 289.4 Q1143.7 288.4 1150.3 289.2 Q1156.8 290.0 1163.4 290.8 Q1168.6 293.6 1174.1 296.3 Q1180.5 297.9 1187.0 299.2 Q1193.7 300.4 1200.4 301.4 Q1207.2 302.2 1213.9 303.2 Q1220.7 304.3 1227.5 305.3 Q1234.3 305.8 1241.1 306.4 Q1247.9 307.0 1254.8 307.5 Q1261.6 307.4 1268.4 306.9 Q1275.1 306.3 1281.1 303.6 Q1286.9 300.0 1291.0 295.7 Q1294.5 290.5 1298.5 285.6 Q1304.4 282.1 1310.7 279.4 Q1317.0 277.0 1323.5 274.7 Q1329.8 272.4 1336.1 269.8 Q1342.3 267.1 1348.5 264.4 Q1354.6 261.6 1361.1 259.7" stroke="#b99b78" stroke-width="1.6" opacity="0.55"/>
<path d="M1124.3 294.5 Q1130.4 291.6 1137.1 289.8 Q1143.7 288.7 1150.3 289.6 Q1156.9 290.6 1163.5 291.8 Q1168.8 294.9 1174.5 297.9 Q1181.0 299.9 1187.6 301.4 Q1194.4 302.8 1201.2 303.8" stroke="#3a2f29" stroke-width="0.8" opacity="0.65"/>
<path d="M1228.1 307.2 Q1234.8 307.5 1241.5 307.8 Q1248.3 308.3 1255.1 308.7 Q1262.0 308.7 1268.8 308.4 Q1275.7 308.2 1281.8 305.9 Q1287.6 302.6 1291.5 298.6 Q1294.8 293.5 1298.6 288.6 Q1304.5 285.1 1310.8 282.3 Q1317.2 279.6 1323.6 277.0 Q1330.0 274.3 1336.2 271.4 Q1342.4 268.4 1348.5 265.4 Q1354.7 262.4 1361.1 260.5 Q1367.6 258.7 1374.2 258.2 Q1380.6 257.9 1386.9 257.5 Q1393.4 256.6 1400.2 256.6" stroke="#3a2f29" stroke-width="0.8" opacity="0.65"/>
<path d="M1118.5 302.2 Q1124.4 298.8 1130.6 296.2 Q1137.3 294.5 1143.9 293.2 Q1150.6 293.5 1157.2 293.9 Q1163.7 294.4 1169.1 296.8 Q1174.8 299.2 1181.2 300.8 Q1187.8 302.1 1194.6 303.4 Q1201.4 304.5 1208.2 305.6 Q1215.0 306.8 1221.9 308.1 Q1228.7 309.3 1235.5 310.0 Q1242.4 310.7 1249.2 311.4 Q1256.0 311.9 1262.8 311.7 Q1269.6 311.1 1276.3 310.5 Q1282.2 307.5 1287.9 303.7 Q1291.6 299.1 1294.9 293.8 Q1298.6 288.8 1304.6 285.4 Q1310.9 282.8 1317.2 280.3 Q1323.7 278.1 1330.1 275.8" stroke="#c9bcae" stroke-width="1.0" opacity="0.50"/>
<path d="M1124.5 301.9 Q1130.7 298.9 1137.4 296.9 Q1144.1 295.2 1150.7 295.3 Q1157.3 295.6 1163.9 296.0 Q1169.4 298.4 1175.1 300.9 Q1181.7 302.6 1188.4 304.1 Q1195.2 305.7 1202.1 307.0 Q1209.0 308.3 1215.9 309.6 Q1222.7 310.9 1229.5 312.0 Q1236.3 312.7 1243.1 313.2 Q1249.8 313.7 1256.6 313.9 Q1263.3 313.5 1270.1 312.9 Q1276.8 312.2 1282.7 309.2 Q1288.4 305.5 1292.0 301.1 Q1295.1 295.9 1298.7 291.1 Q1304.7 287.9 1311.0 285.4 Q1317.4 283.0 1323.8 280.8 Q1330.2 278.3 1336.5 275.5" stroke="#2f2621" stroke-width="1.1" opacity="0.70"/>
<path d="M1103.9 320.8 Q1109.2 316.7 1113.6 311.3 Q1118.6 306.5 1124.5 302.6 Q1130.7 299.4 1137.4 297.5 Q1144.1 296.1 1150.8 296.5 Q1157.4 297.1 1164.1 297.8 Q1169.7 300.5 1175.6 303.0 Q1182.2 304.8 1189.0 306.3 Q1195.8 307.8 1202.7 309.0 Q1209.5 310.0 1216.3 311.1" stroke="#d9cdbf" stroke-width="1.2" opacity="0.55"/>
<path d="M1250.3 315.5 Q1257.2 316.3 1264.2 316.5 Q1271.1 316.4 1277.9 316.2 Q1283.8 313.2 1289.5 309.3 Q1292.7 304.5 1295.4 298.8 Q1298.8 293.5 1304.8 289.8 Q1311.1 286.8 1317.4 284.1 Q1323.9 281.5 1330.2 279.0 Q1336.5 276.1 1342.7 273.3 Q1348.8 270.3 1355.0 267.3 Q1361.4 265.1 1367.9 263.1 Q1374.5 262.1 1380.8 261.2" stroke="#d9cdbf" stroke-width="1.2" opacity="0.55"/>
<path d="M1113.6 312.7 Q1118.7 308.4 1124.6 305.0 Q1130.8 302.4 1137.6 301.0 Q1144.3 299.9 1151.0 300.3 Q1157.7 300.7 1164.4 301.1" stroke="#4a3d34" stroke-width="1.1" opacity="0.60"/>
<path d="M1189.3 307.3 Q1196.1 308.7 1203.0 310.0 Q1209.9 311.3 1216.8 312.8 Q1223.7 314.2 1230.6 315.5 Q1237.4 316.5 1244.3 317.4 Q1251.1 318.2 1257.9 318.7 Q1264.7 318.5 1271.5 318.1 Q1278.3 317.6 1284.2 314.3 Q1289.8 310.3 1292.9 305.4 Q1295.6 299.8 1298.9 294.7 Q1304.9 291.3 1311.1 288.6 Q1317.5 286.1 1324.0 283.7 Q1330.4 281.3 1336.6 278.5 Q1342.9 275.5 1349.0 272.3 Q1355.1 269.1 1361.4 266.6" stroke="#4a3d34" stroke-width="1.1" opacity="0.60"/>
<path d="M1097.7 326.8 Q1104.1 325.1 1109.4 321.6 Q1113.8 316.6 1118.7 312.2 Q1124.7 308.6 1131.0 305.7 Q1137.7 303.8 1144.4 302.1 Q1151.1 301.9 1157.8 301.8 Q1164.5 301.8 1170.2 303.6 Q1176.2 305.6 1182.8 306.9 Q1189.6 308.3 1196.4 309.8 Q1203.3 311.1 1210.2 312.5 Q1217.1 313.9 1224.0 315.4 Q1230.9 316.7 1237.8 317.7 Q1244.6 318.6 1251.4 319.4 Q1258.2 319.9 1265.1 319.7 Q1271.9 319.3 1278.7 318.8 Q1284.5 315.5 1290.1 311.4" stroke="#b99b78" stroke-width="1.4" opacity="0.55"/>
<path d="M1311.2 290.0 Q1317.6 287.2 1324.0 284.7 Q1330.4 282.1 1336.7 279.2 Q1342.9 276.3 1349.0 273.2 Q1355.2 270.1 1361.5 267.7" stroke="#b99b78" stroke-width="1.4" opacity="0.55"/>
<path d="M1097.8 330.0 Q1104.3 328.2 1109.6 324.4 Q1113.8 319.1 1118.8 314.3 Q1124.7 310.4 1131.0 307.2 Q1137.8 305.1 1144.5 303.3 Q1151.2 303.1 1157.9 303.0 Q1164.6 303.2 1170.4 305.2" stroke="#3a2f29" stroke-width="0.8" opacity="0.65"/>
<path d="M1203.8 312.8 Q1210.7 314.0 1217.5 315.3 Q1224.4 316.6 1231.3 318.0 Q1238.2 319.1 1245.1 320.3 Q1252.0 321.5 1258.9 322.4 Q1265.9 322.7 1272.8 322.7 Q1279.7 322.6 1285.6 319.3 Q1291.1 315.1 1293.8 309.8 Q1296.0 303.8 1299.1 298.3 Q1305.0 294.6 1311.3 291.5 Q1317.7 288.7 1324.1 286.1 Q1330.5 283.5 1336.8 280.6 Q1343.0 277.6 1349.1 274.5 Q1355.2 271.3 1361.6 268.8 Q1368.1 266.6 1374.7 265.3 Q1381.0 263.8 1387.2 262.1 Q1393.6 260.3 1400.5 259.9 Q1407.1 259.8 1412.5 257.8" stroke="#3a2f29" stroke-width="0.8" opacity="0.65"/>
<path d="M1084.8 333.7 Q1091.3 333.1 1097.9 331.5 Q1104.4 329.9 1109.7 326.4 Q1113.9 321.3 1118.8 316.8 Q1124.8 313.3 1131.2 310.4 Q1137.9 308.4 1144.7 306.7 Q1151.4 306.2 1158.2 305.9 Q1164.9 305.7 1170.8 307.2 Q1176.9 308.9 1183.6 310.0 Q1190.4 311.3 1197.3 312.8 Q1204.2 314.1 1211.2 315.6 Q1218.1 317.1 1225.0 318.6 Q1231.9 320.1 1238.8 321.2 Q1245.7 322.3 1252.5 323.2 Q1259.3 323.9 1266.2 323.9 Q1273.1 323.6 1279.9 323.2 Q1285.7 319.7 1291.2 315.5 Q1293.9 310.3 1296.1 304.5 Q1299.1 299.2 1305.1 295.7 Q1311.4 292.9 1317.8 290.3 Q1324.2 287.9 1330.6 285.3 Q1336.9 282.3 1343.1 279.2" stroke="#c9bcae" stroke-width="1.0" opacity="0.50"/>
<path d="M1114.0 322.9 Q1118.9 318.5 1124.9 315.1 Q1131.2 312.4 1138.0 310.6 Q1144.8 309.1 1151.6 308.7 Q1158.4 308.3 1165.1 308.0 Q1171.1 309.2 1177.3 310.7 Q1184.0 311.6 1190.8 312.7 Q1197.6 314.0 1204.6 315.3 Q1211.5 316.6 1218.4 318.1 Q1225.3 319.6 1232.3 321.2 Q1239.2 322.5 1246.1 323.7 Q1253.0 324.9 1259.9 325.9 Q1266.8 326.0 1273.8 326.0 Q1280.6 325.8 1286.4 322.2 Q1291.9 317.8 1294.3 312.3 Q1296.3 306.3 1299.2 300.7 Q1305.2 297.1 1311.4 294.1 Q1317.8 291.4 1324.3 288.8 Q1330.7 286.2 1337.0 283.3 Q1343.2 280.2 1349.3 277.0 Q1355.4 273.7 1361.7 270.9" stroke="#2f2621" stroke-width="0.7" opacity="0.70"/>
<path d="M1084.9 339.9 Q1091.4 339.6 1098.1 338.0 Q1104.8 336.2 1110.0 332.2 Q1114.1 326.4 1118.9 321.3 Q1124.9 317.3 1131.3 314.1 Q1138.1 312.0 1144.9 310.3 Q1151.7 309.9 1158.5 309.7 Q1165.3 309.7 1171.4 311.3 Q1177.8 313.0 1184.6 314.2 Q1191.6 315.6 1198.5 317.1 Q1205.5 318.5 1212.5 319.8 Q1219.3 321.2 1226.2 322.5 Q1233.0 323.7 1239.8 324.6 Q1246.6 325.5 1253.4 326.3 Q1260.2 327.0 1267.2 327.1 Q1274.1 327.2 1281.1 327.3 Q1286.9 324.1 1292.5 320.2 Q1294.8 315.0 1296.7 309.3 Q1299.3 304.0 1305.4 300.6 Q1311.6 297.5 1318.0 294.6 Q1324.5 291.8 1330.8 288.8 Q1337.1 285.4 1343.3 281.9 Q1349.4 278.2 1355.5 274.6 Q1361.7 271.6 1368.2 269.1 Q1374.8 267.4 1381.1 265.7 Q1387.3 263.7 1393.7 261.8 Q1400.7 261.4 1407.3 261.1" stroke="#d9cdbf" stroke-width="1.0" opacity="0.55"/>
<path d="M1098.2 339.0 Q1104.9 337.6 1110.1 334.1 Q1114.2 328.8 1119.0 324.3 Q1125.1 320.9 1131.5 318.2 Q1138.3 316.5 1145.1 314.8 Q1152.0 314.1 1158.8 313.5 Q1165.6 312.9 1171.8 313.7 Q1178.2 314.8 1185.0 315.5 Q1191.8 316.6 1198.8 317.9 Q1205.7 319.1 1212.7 320.6 Q1219.6 322.1 1226.6 323.8 Q1233.5 325.4 1240.5 326.9 Q1247.4 328.4 1254.3 329.7 Q1261.3 330.9 1268.3 331.2 Q1275.3 331.3 1282.2 331.3 Q1287.9 327.5 1293.3 323.0 Q1295.2 317.1 1296.8 310.8 Q1299.4 305.0 1305.4 301.4 Q1311.6 298.2 1318.0 295.3 Q1324.5 292.7 1330.9 289.9 Q1337.2 286.9 1343.4 283.7 Q1349.5 280.3 1355.6 276.9 Q1361.9 273.9 1368.4 271.3 Q1375.0 269.5 1381.3 267.3 Q1387.4 264.9 1393.8 262.6" stroke="#4a3d34" stroke-width="1.0" opacity="0.60"/>
<path d="M1084.9 344.8 Q1091.6 344.7 1098.4 343.0 Q1105.1 341.3 1110.3 337.1 Q1114.2 331.1 1119.0 325.9 Q1125.1 322.0 1131.5 318.9 Q1138.3 316.9 1145.1 315.2 Q1152.0 314.7 1158.9 314.5 Q1165.7 314.3 1172.1 315.5 Q1178.6 316.9 1185.6 317.8 Q1192.6 319.1 1199.5 320.6 Q1206.5 321.9 1213.5 323.2 Q1220.3 324.5 1227.2 325.8 Q1234.0 327.1 1240.8 328.1" stroke="#b99b78" stroke-width="1.4" opacity="0.55"/>
<path d="M1275.8 333.2 Q1282.7 333.2 1288.4 329.4 Q1293.8 324.9 1295.7 319.1 Q1297.1 313.0 1299.5 307.4 Q1305.5 304.0 1311.8 300.9 Q1318.2 298.1 1324.7 295.4 Q1331.1 292.6 1337.3 289.3 Q1343.6 285.9 1349.6 282.2 Q1355.7 278.5 1361.9 275.3 Q1368.4 272.4 1375.1 270.4" stroke="#b99b78" stroke-width="1.4" opacity="0.55"/>
<path d="M1131.6 322.0 Q1138.5 319.8 1145.3 317.8 Q1152.1 316.8 1159.0 316.1 Q1165.8 315.5 1172.2 316.3 Q1178.8 317.5 1185.7 318.3 Q1192.7 319.7 1199.7 321.3 Q1206.8 322.8 1213.8 324.4 Q1220.8 326.1 1227.8 327.7 Q1234.7 329.2 1241.5 330.5 Q1248.4 331.7 1255.2 332.9 Q1262.1 333.7 1269.1 333.9 Q1276.0 333.9 1283.0 334.0 Q1288.6 330.3 1294.1 325.9 Q1295.9 320.2 1297.2 314.1 Q1299.5 308.5 1305.6 305.1 Q1311.8 302.0 1318.2 299.1 Q1324.7 296.4 1331.1 293.4 Q1337.4 290.1 1343.6 286.6 Q1349.7 282.8 1355.7 279.0 Q1362.0 275.7 1368.5 272.8 Q1375.1 270.8 1381.3 268.4" stroke="#3a2f29" stroke-width="0.8" opacity="0.65"/>
<path d="M1125.2 325.9 Q1131.6 323.2 1138.5 321.6 Q1145.4 320.2 1152.3 319.7 Q1159.3 319.2 1166.2 318.7 Q1172.7 319.4 1179.4 320.3 Q1186.3 320.7 1193.3 321.7 Q1200.2 322.9 1207.2 324.0 Q1214.1 325.2 1220.9 326.5 Q1227.8 327.9 1234.7 329.4 Q1241.6 330.8 1248.6 332.3 Q1255.5 333.9 1262.5 335.3 Q1269.7 336.0 1276.8 336.7 Q1283.9 337.4 1289.6 333.8 Q1295.1 329.4 1296.5 323.4 Q1297.5 316.9 1299.6 310.8 Q1305.7 306.9 1311.9 303.3 Q1318.3 299.9 1324.7 296.8 Q1331.1 293.6 1337.4 290.2 Q1343.6 286.8 1349.7 283.2 Q1355.8 279.7 1362.0 276.6 Q1368.5 274.1 1375.2 272.2" stroke="#c9bcae" stroke-width="1.2" opacity="0.50"/>
<path d="M1098.6 349.9 Q1105.5 348.5 1110.7 344.4 Q1114.4 338.2 1119.1 332.8 Q1125.3 328.9 1131.7 325.7 Q1138.6 323.6 1145.5 321.7 Q1152.4 320.8 1159.3 320.1 Q1166.3 319.6 1172.8 320.3 Q1179.6 321.4 1186.7 322.1 Q1193.7 323.3 1200.8 324.9 Q1207.8 326.3 1214.8 327.8 Q1221.8 329.3 1228.7 330.7 Q1235.6 332.2 1242.4 333.4 Q1249.2 334.7 1256.1 335.9 Q1263.0 337.0 1270.0 337.4 Q1277.1 337.9 1284.2 338.4 Q1289.9 334.8 1295.4 330.5 Q1296.8 324.7 1297.7 318.4 Q1299.7 312.6 1305.8 309.1 Q1312.0 305.7 1318.4 302.5 Q1324.9 299.4 1331.3 296.2 Q1337.5 292.6 1343.8 288.9 Q1349.8 284.9 1355.9 281.1 Q1362.1 277.7 1368.6 274.8 Q1375.2 272.7 1381.5 270.2 Q1387.6 267.4 1393.9 264.8" stroke="#2f2621" stroke-width="0.8" opacity="0.70"/>
<path d="M1131.9 329.7 Q1138.8 327.7 1145.7 325.7 Q1152.6 324.4 1159.6 323.1 Q1166.5 322.0 1173.1 322.1 Q1179.9 322.6 1186.9 322.9 Q1193.9 323.9 1200.9 325.4 Q1208.0 326.8 1215.1 328.5 Q1222.1 330.3 1229.1 332.2 Q1236.1 334.1 1243.1 335.9 Q1250.1 337.6 1257.0 339.3 Q1264.0 340.6 1271.1 341.0 Q1278.1 341.3 1285.1 341.6 Q1290.6 337.3 1295.9 332.4 Q1297.0 326.0 1297.8 319.3 Q1299.7 313.3 1305.8 309.6 Q1312.1 306.3 1318.4 303.3 Q1325.0 300.5 1331.4 297.5 Q1337.7 294.2 1343.9 290.8 Q1349.9 287.1 1356.0 283.3 Q1362.2 279.8 1368.7 276.8 Q1375.3 274.4 1381.6 271.5 Q1387.7 268.3 1393.9 265.4 Q1401.0 264.6 1407.7 263.5" stroke="#d9cdbf" stroke-width="1.0" opacity="0.55"/>
<path d="M1114.6 342.5 Q1119.2 337.2 1125.4 333.6 Q1131.9 330.7 1138.9 329.0 Q1145.8 327.4 1152.8 326.5 Q1159.8 325.8 1166.8 325.0 Q1173.6 325.2 1180.6 325.8 Q1187.7 326.0 1194.7 327.0 Q1201.8 328.3 1208.8 329.5 Q1215.7 330.8 1222.7 332.3 Q1229.6 333.7 1236.5 335.3 Q1243.4 336.8 1250.3 338.4 Q1257.3 340.1 1264.3 341.7 Q1271.5 342.6 1278.7 343.5 Q1285.9 344.4 1291.5 340.7 Q1296.9 336.1 1297.8 329.7 Q1298.3 323.0 1299.9 316.7 Q1306.0 312.8 1312.2 309.0 Q1318.6 305.5 1325.1 302.3 Q1331.5 298.9 1337.7 295.2 Q1343.9 291.5 1350.0 287.7 Q1356.0 283.9 1362.3 280.5 Q1368.8 277.7 1375.4 275.5 Q1381.7 272.6 1387.8 269.4 Q1394.0 266.5 1401.2 265.7" stroke="#4a3d34" stroke-width="1.0" opacity="0.60"/>
<path d="M1111.2 353.1 Q1114.7 346.8 1119.3 341.5 Q1125.5 337.6 1132.1 334.4 Q1139.0 332.1 1145.9 329.9 Q1152.9 328.4 1159.9 327.1 Q1166.9 325.9 1173.7 325.9 Q1180.7 326.4 1187.9 326.8 Q1195.0 328.0 1202.2 329.6 Q1209.3 331.1 1216.4 332.9 Q1223.4 334.8 1230.4 336.6 Q1237.4 338.4 1244.3 340.0 Q1251.2 341.6 1258.1 343.1 Q1265.0 344.4 1272.1 344.8 Q1279.2 345.2 1286.3 345.8 Q1291.8 341.6 1297.1 336.9" stroke="#b99b78" stroke-width="1.4" opacity="0.55"/>
<path d="M1312.3 311.7 Q1318.7 308.2 1325.2 304.9 Q1331.6 301.4 1337.9 297.6 Q1344.1 293.8 1350.1 289.7 Q1356.2 285.8 1362.3 282.1 Q1368.8 279.1 1375.5 276.7" stroke="#b99b78" stroke-width="1.4" opacity="0.55"/>
<path d="M1099.0 358.7 Q1106.1 358.0 1111.3 354.5 Q1114.8 348.6 1119.3 343.6 Q1125.6 340.2 1132.2 337.3 Q1139.2 335.3 1146.1 333.3 Q1153.1 331.6 1160.2 330.1 Q1167.2 328.5 1174.1 328.0 Q1181.1 328.0 1188.2 328.0 Q1195.3 328.9 1202.4 330.4 Q1209.5 331.8 1216.6 333.6 Q1223.7 335.5 1230.7 337.5 Q1237.8 339.6 1244.8 341.7 Q1251.8 343.7 1258.8 345.6 Q1265.8 347.2 1273.0 347.9 Q1280.1 348.4 1287.2 348.9 Q1292.6 344.4 1297.8 339.2 Q1298.3 332.3 1298.5 325.3 Q1300.0 318.9 1306.1 315.1 Q1312.3 311.5 1318.7 308.3 Q1325.2 305.4 1331.7 302.3 Q1337.9 298.9 1344.2 295.4 Q1350.2 291.5 1356.3 287.6 Q1362.4 283.9 1368.9 280.7 Q1375.6 277.9 1381.8 274.4 Q1387.8 270.7 1394.1 267.4" stroke="#3a2f29" stroke-width="0.9" opacity="0.65"/>
<path d="M1111.5 357.7 Q1114.9 351.4 1119.4 346.1 Q1125.7 342.3 1132.3 339.2 Q1139.2 336.9 1146.2 334.6 Q1153.2 332.8 1160.2 331.2 Q1167.3 329.7 1174.3 329.3 Q1181.4 329.4 1188.6 329.5 Q1195.7 330.6 1202.9 332.2 Q1210.1 333.8 1217.2 335.7 Q1224.3 337.7 1231.4 339.7 Q1238.4 341.7 1245.4 343.6 Q1252.3 345.4 1259.2 347.1" stroke="#c9bcae" stroke-width="1.0" opacity="0.50"/>
<path d="M1293.2 346.4 Q1298.4 341.6 1298.8 335.0 Q1298.9 328.2 1300.1 322.0 Q1306.3 318.4 1312.5 314.7 Q1318.9 311.4 1325.4 308.2 Q1331.8 304.7 1338.1 300.9 Q1344.3 297.0 1350.3 292.8 Q1356.3 288.6 1362.5 284.7 Q1369.0 281.4 1375.6 278.6" stroke="#c9bcae" stroke-width="1.0" opacity="0.50"/>
<path d="M1114.9 352.7 Q1119.4 347.7 1125.7 344.4 Q1132.4 341.7 1139.4 339.8 Q1146.4 337.8 1153.4 336.0 Q1160.5 334.3 1167.6 332.5 Q1174.6 331.7 1181.8 331.4 Q1189.0 331.1 1196.1 331.9 Q1203.2 333.3 1210.4 334.7 Q1217.4 336.4 1224.5 338.4 Q1231.6 340.4 1238.7 342.6 Q1245.7 344.8 1252.8 347.1 Q1259.8 349.2 1266.9 351.0 Q1274.1 351.9 1281.3 352.7 Q1288.5 353.4 1293.8 348.8 Q1298.9 343.4 1299.1 336.2 Q1298.9 328.8 1300.1 322.2 Q1306.3 318.3 1312.5 314.5 Q1318.9 311.2 1325.4 308.1 Q1331.8 304.9 1338.1 301.4 Q1344.4 297.9 1350.4 294.0 Q1356.4 290.0 1362.6 286.2 Q1369.1 282.9 1375.7 280.0 Q1381.9 276.3 1388.0 272.2 Q1394.2 268.6 1401.3 267.5" stroke="#2f2621" stroke-width="1.1" opacity="0.70"/>
</g>
<circle cx="1240.500" cy="308.800" r="5.200" fill="#3a2e27" filter="url(#b06)"/>
<circle cx="1241.500" cy="307.800" r="2.600" fill="#6b5a4c" filter="url(#b06)"/>
<ellipse cx="1329" cy="246" rx="4.500" ry="3" fill="#4a3a2e" transform="rotate(-35 1329 246)" filter="url(#b06)"/>
<circle cx="1143" cy="278" r="1.200" fill="#2e2520"/>
<circle cx="1299" cy="281" r="1.200" fill="#2e2520"/>
<circle cx="1326" cy="273" r="1.200" fill="#2e2520"/>
<circle cx="1340" cy="265" r="1.200" fill="#2e2520"/>
<circle cx="1363" cy="277" r="1.200" fill="#2e2520"/>
<g stroke="#d6cabd" filter="url(#b06)" opacity="0.700">
<path d="M1100 290 C1120 276 1138 270 1155 276 C1175 286 1200 292 1240 292" stroke-width="1.2"/>
<path d="M1260 286 C1290 280 1310 268 1322 254" stroke-width="1.0"/>
<path d="M1300 300 C1330 288 1360 270 1395 262" stroke-width="1.3"/>
<path d="M1140 322 C1170 316 1200 320 1228 328" stroke-width="1.2"/>
<path d="M1250 336 C1270 342 1285 340 1296 334" stroke-width="1.0"/>
<path d="M1090 336 C1094 348 1100 358 1108 364" stroke-width="1.0"/>
</g>
<rect x="1050" y="220" width="375" height="160" filter="url(#fDrift)" opacity="0.3"/>
</g>
</svg>
<!-- DRIFT END -->
<!-- MISC START -->
<svg class="abs" style="left:0;top:0;" width="1473" height="1127" viewBox="0 0 1473 1127" fill="none" stroke-linecap="round" stroke-linejoin="round">
<defs><clipPath id="cRight"><rect x="1300" y="500" width="125" height="400"/></clipPath>
<linearGradient id="gLeaf" x1="0" y1="0" x2="1" y2="1"><stop offset="0" stop-color="#2f6b40"/><stop offset="0.5" stop-color="#1f4d2c"/><stop offset="1" stop-color="#173a21"/></linearGradient>
<filter id="bl"><feGaussianBlur stdDeviation="1.2"/></filter>
</defs>
<g stroke="#050505" stroke-width="3.300">
<path d="M781.200 438.800 L802.600 425.400"/>
<path d="M807 403.500 C806 412 811 424 819.500 430.300 C824 433 827.500 429 827.200 420 C826.500 410 821 402 814.500 400.200 C810.500 399.300 808 401 807 403.500 C807 406 807.300 408 808 410"/>
<path d="M838.200 398.400 C833 397.500 831 404 833.500 411 C836 417.500 840 420 840.500 414 C841 409 839.500 403.500 837.400 400 C839.500 405 842.500 410.500 847.800 411"/>
<path d="M840 383.600 C845 393 851 402 856.200 408.600"/>
<path d="M851.600 380 C851.400 386 850.600 392 849.800 398 C855 397.200 861 397.200 866.800 397.800"/>
<path d="M857.400 373.800 C858.500 368.500 862 364.800 866 364.800 C870 365.200 869.800 372 867.600 379 C867 381.500 866.300 383.500 865.800 385"/>
</g>
<circle cx="874.300" cy="390.900" r="2.100" fill="#050505"/>
<text x="1250.500" y="534.800" text-anchor="end" font-family="Liberation Sans, sans-serif" font-size="8.800" fill="#85867d" letter-spacing="0.25">SW 7015</text>
<text x="1250.500" y="546.200" text-anchor="end" font-family="Liberation Sans, sans-serif" font-size="8.800" fill="#85867d" letter-spacing="-0.35">Repose Gray</text>
<g clip-path="url(#cRight)">
<path d="M1401.600 556.200 C1404 561 1411 574 1417 587 C1421 596 1424 603 1426 608 L1426 650 C1421 642 1414 626 1410 614 C1405 598 1402 580 1401.600 556.200Z" fill="#24482e"/>
<path d="M1348.500 583.900 C1356 588 1366 594 1373 600 C1386 611 1400 626 1412 638 C1418 644 1423 649 1426 652 L1426 662.500 C1416 658 1404 650 1394 641 C1382 630 1368 614 1360 604 C1355 597 1351 590 1348.500 583.900Z" fill="#24482e"/>
<path d="M1353.100 660.100 C1362 660.500 1372 662.500 1380 664.500 C1396 668.500 1412 672 1426 674.500 L1426 691.500 C1414 689.500 1400 685 1390 680.500 C1376 674 1362 666 1353.100 660.100Z" fill="#24482e"/>
<path d="M1348.500 686 C1358 686.500 1370 689.500 1380 692 C1396 696 1412 699.500 1426 702 L1426 718 C1414 716 1400 713 1388 709.500 C1374 704 1358 694 1348.500 686Z" fill="#24482e"/>
<path d="M1363.500 732.800 C1371 730.500 1380 729.800 1388 729.300 C1402 728.500 1416 728.200 1426 728.200 L1426 746.500 C1414 745 1400 743 1388 740.800 C1378 738.500 1368 735 1363.500 732.800Z" fill="#24482e"/>
<path d="M1379.700 783.600 C1385 779.500 1392 776.500 1399 774.400 C1408 771.500 1418 769 1426 767.500 L1426 779 C1416 779.300 1406 779.800 1399 780.300 C1392 781 1385 782.500 1379.700 783.600Z" fill="#24482e"/>
<path d="M1353 587 C1370 598 1392 620 1410 638 C1416 644 1421 648 1425 652" stroke="#4d8059" stroke-width="3" opacity="0.700" filter="url(#bl)"/>
<path d="M1403 566 C1406 584 1412 606 1422 630" stroke="#467652" stroke-width="3" opacity="0.700" filter="url(#bl)"/>
<path d="M1359 661.500 C1378 664.500 1402 671 1425 679" stroke="#4d8059" stroke-width="3.5" opacity="0.700" filter="url(#bl)"/>
<path d="M1355 687.500 C1376 691 1402 698 1425 706" stroke="#4d8059" stroke-width="3.5" opacity="0.700" filter="url(#bl)"/>
<path d="M1369 732.500 C1386 731 1406 731.500 1425 733" stroke="#4d8059" stroke-width="3.5" opacity="0.700" filter="url(#bl)"/>
<path d="M1385 781.500 C1396 777 1410 773.500 1425 771" stroke="#4d8059" stroke-width="2.5" opacity="0.700" filter="url(#bl)"/>
<path d="M1352 587 C1372 604 1400 636 1425 658" stroke="#16301d" stroke-width="1.100" opacity="0.750"/>
<path d="M1357 662 C1380 670 1404 680 1425 686" stroke="#16301d" stroke-width="1.100" opacity="0.750"/>
<path d="M1353 688.500 C1376 698 1402 708 1425 712.500" stroke="#16301d" stroke-width="1.100" opacity="0.750"/>
<path d="M1367 733.500 C1386 736.500 1406 739.500 1425 741" stroke="#16301d" stroke-width="1.100" opacity="0.750"/>
</g>
</svg>
<!-- MISC END -->
<!-- ICONS OVERLAY -->
<svg class="abs" style="left:0;top:0;" width="1473" height="1127" viewBox="0 0 1473 1127" fill="none" stroke-linecap="round" stroke-linejoin="round">
<!-- inverse corners of tab -->
<path d="M109.500 106 V111.500 H104 A5.500 5.500 0 0 0 109.500 106Z" fill="#3562a4"/>
<path d="M529.500 106 V111.500 H535 A5.500 5.500 0 0 1 529.500 106Z" fill="#3562a4"/>
<!-- status: three dots -->
<g fill="#8d8f96"><circle cx="729.3" cy="60.2" r="2.4"/><circle cx="737.4" cy="60.2" r="2.4"/><circle cx="745.4" cy="60.2" r="2.4"/></g>
<!-- signal -->
<g fill="#fff"><rect x="1347.2" y="63" width="2.6" height="3.2" rx=".8"/><rect x="1351.3" y="60.8" width="2.6" height="5.4" rx=".8"/><rect x="1355.4" y="58.4" width="2.6" height="7.8" rx=".8"/><rect x="1359.5" y="56" width="2.6" height="10.2" rx=".8"/></g>
<!-- wifi -->
<g stroke="#fff" stroke-width="1.9" stroke-linecap="butt"><path d="M1367.6 59.8 A9.2 9.2 0 0 1 1380.4 59.8"/><path d="M1370 62.4 A5.8 5.8 0 0 1 1378 62.4"/></g>
<path d="M1374 66.4 L1371.9 64.2 A3 3 0 0 1 1376.1 64.2Z" fill="#fff"/>
<!-- battery -->
<rect x="1385.4" y="55.8" width="22.6" height="10.8" rx="3" stroke="#c9d2e0" stroke-width="1"/>
<rect x="1387" y="57.4" width="19.4" height="7.6" rx="1.7" fill="#fff"/>
<path d="M1409.6 59.6 v3.2" stroke="#9fb0cc" stroke-width="1.3"/>
<!-- home -->
<path d="M73 96 V88.6 L79 83.6 L85 88.6 V96 H81.4 V91.6 A2.4 2.4 0 0 0 76.6 91.6 V96Z" stroke="#a9bad6" stroke-width="1.5"/>
<!-- chevron tab -->
<path d="M235 90 L239.4 94.4 L243.8 90" stroke="#fff" stroke-width="1.7"/>
<!-- close -->
<path d="M510.4 87 L517.2 93.8 M517.2 87 L510.4 93.8" stroke="#dbe4f3" stroke-width="1.4"/>
<!-- grid -->
<g stroke="#e6ecf7" stroke-width="1.5"><rect x="70.8" y="125.4" width="6.6" height="6.2" rx="1.5"/><rect x="80.8" y="125.4" width="6.6" height="6.2" rx="1.5"/><rect x="70.8" y="135" width="6.6" height="6.2" rx="1.5"/><rect x="80.8" y="135" width="6.6" height="6.2" rx="1.5"/></g>
<!-- search -->
<circle cx="121.6" cy="131" r="7.6" stroke="#f2f5fb" stroke-width="1.6"/><path d="M127.2 136.6 L132.6 142" stroke="#f2f5fb" stroke-width="1.6"/>
<!-- ask chat -->
<circle cx="168" cy="132.8" r="15.8" fill="#2f5390"/>
<path d="M164 127.4 H174 A3 3 0 0 1 177 130.400 V137.400 A3 3 0 0 1 174 140.400 H173.400 V143 L170 140.400 H165 A3 3 0 0 1 162 137.400 V131" fill="#a9c6ec" stroke="#fff" stroke-width="1.3"/>
<path d="M164.500 121.900 L165.300 124.800 L168.200 125.600 L165.300 126.400 L164.500 129.300 L163.700 126.400 L160.800 125.600 L163.700 124.800Z M158.900 128 L159.500 129.700 L161.200 130.300 L159.500 130.900 L158.900 132.600 L158.300 130.900 L156.600 130.300 L158.300 129.700Z" fill="#fff"/>
<!-- pen mode -->
<circle cx="669.8" cy="131.600" r="18.300" fill="#a9c6ec"/>
<g stroke="#1d1d1d" stroke-width="1.5">
<path d="M660.400 141 L662.400 135 L674.600 122.800 A2.600 2.600 0 0 1 678.300 122.800 L679 123.500 A2.600 2.600 0 0 1 679 127.200 L666.800 139.400Z" fill="#2eb6d8"/>
<path d="M660.400 141 L662.400 135 L666.800 139.400Z" fill="#e8c98c"/>
<path d="M669.600 141.400 C672.500 141.400 676.400 139.800 677.300 137.400 C678 135.600 675.600 134.800 674.600 136.800 C673.600 139 674.800 141.400 677.600 141 C678.600 140.900 679.400 140.400 680 139.800"/>
</g>
<!-- keyboard -->
<g stroke="#fff"><rect x="728.200" y="124.800" width="20.400" height="14.200" rx="2.600" stroke-width="1.600"/>
<path d="M733.200 135.200 H743.600" stroke-width="1.500"/>
<path d="M732.200 128.800 h.2 M735.400 128.800 h.2 M738.600 128.800 h.2 M741.800 128.800 h.2 M744.800 128.800 h.2 M733.800 131.800 h.2 M737 131.800 h.2 M740.200 131.800 h.2 M743.400 131.800 h.2" stroke-width="1.500"/></g>
<!-- mic -->
<g stroke="#fff" stroke-width="1.600"><rect x="803.300" y="121.600" width="7.200" height="13.600" rx="3.600"/><path d="M799.800 130.600 A7.100 7.100 0 0 0 814 130.600 M806.900 137.900 V142 M802.600 142.200 H811.200"/></g>
<!-- new page -->
<g stroke="#fff" stroke-width="1.600"><path d="M1284.600 124.800 H1276 A2.600 2.600 0 0 0 1273.400 127.400 V142.600 A2.600 2.600 0 0 0 1276 145.200 H1286.600 A2.600 2.600 0 0 0 1289.200 142.600 V129.400 Z M1284.600 124.800 V129.400 H1289.200"/><path d="M1281.300 134.600 V141.200 M1278 137.900 H1284.600" stroke-width="1.400"/></g>
<!-- bookmark -->
<path d="M1319 144.600 V128 A2.400 2.400 0 0 1 1321.400 125.600 H1330.400 A2.400 2.400 0 0 1 1332.800 128 V144.600 L1325.900 139.400Z" stroke="#fff" stroke-width="1.600"/>
<!-- share -->
<g stroke="#fff" stroke-width="1.600"><path d="M1369.900 138.600 V126.200 M1364.800 131.200 L1369.900 126 L1375 131.200"/><path d="M1360.800 138.800 V142 A2.400 2.400 0 0 0 1363.200 144.400 H1376.600 A2.400 2.400 0 0 0 1379 142 V138.800"/></g>
<g fill="#fff"><circle cx="1407.300" cy="135" r="1.700"/><circle cx="1414.400" cy="135" r="1.700"/><circle cx="1421.400" cy="135" r="1.700"/></g>

<!-- PANEL HEADER ICONS -->
<rect x="67.400" y="170.700" width="23.200" height="20.400" rx="3.600" stroke="#0d6fd4" stroke-width="1.900"/>
<rect x="70.400" y="173.400" width="7" height="15" rx="2" fill="#0d6fd4"/>
<circle cx="335.600" cy="180.200" r="8" fill="#d9d9d9"/><path d="M332.400 178.800 L335.600 182 L338.800 178.800" stroke="#7a7a7a" stroke-width="1.500"/>
<circle cx="460.800" cy="180.900" r="11.500" stroke="#0d6fd4" stroke-width="1.700"/>
<path d="M457.200 178 A3.700 3.700 0 1 1 463 181 C461.400 182 460.800 182.400 460.800 183.400" stroke="#0d6fd4" stroke-width="1.600"/><circle cx="460.800" cy="186.700" r="1.100" fill="#0d6fd4"/>

<path d="M417.85 180.90 L417.85 181.20 L417.86 181.50 L417.88 181.80 L417.94 182.11 L418.07 182.45 L418.32 182.82 L418.73 183.25 L419.19 183.73 L419.55 184.23 L419.73 184.70 L419.76 185.13 L419.69 185.53 L419.57 185.91 L419.40 186.27 L419.22 186.62 L419.00 186.96 L418.77 187.29 L418.50 187.59 L418.19 187.84 L417.80 188.03 L417.31 188.11 L416.70 188.04 L416.05 187.89 L415.47 187.76 L415.02 187.72 L414.67 187.77 L414.37 187.88 L414.10 188.01 L413.83 188.16 L413.57 188.30 L413.32 188.45 L413.06 188.61 L412.81 188.78 L412.57 188.99 L412.35 189.27 L412.15 189.67 L411.98 190.24 L411.79 190.88 L411.54 191.44 L411.23 191.83 L410.87 192.07 L410.49 192.21 L410.10 192.29 L409.70 192.34 L409.30 192.35 L408.90 192.34 L408.50 192.29 L408.11 192.21 L407.73 192.07 L407.37 191.83 L407.06 191.44 L406.81 190.88 L406.62 190.24 L406.45 189.67 L406.25 189.27 L406.03 188.99 L405.79 188.78 L405.54 188.61 L405.28 188.45 L405.03 188.30 L404.77 188.16 L404.50 188.01 L404.23 187.88 L403.93 187.77 L403.58 187.72 L403.13 187.76 L402.55 187.89 L401.90 188.04 L401.29 188.11 L400.80 188.03 L400.41 187.84 L400.10 187.59 L399.83 187.29 L399.60 186.96 L399.38 186.62 L399.20 186.27 L399.03 185.91 L398.91 185.53 L398.84 185.13 L398.87 184.70 L399.05 184.23 L399.41 183.73 L399.87 183.25 L400.28 182.82 L400.53 182.45 L400.66 182.11 L400.72 181.80 L400.74 181.50 L400.75 181.20 L400.75 180.90 L400.75 180.60 L400.74 180.30 L400.72 180.00 L400.66 179.69 L400.53 179.35 L400.28 178.98 L399.87 178.55 L399.41 178.07 L399.05 177.57 L398.87 177.10 L398.84 176.67 L398.91 176.27 L399.03 175.89 L399.20 175.53 L399.38 175.18 L399.60 174.84 L399.83 174.51 L400.10 174.21 L400.41 173.96 L400.80 173.77 L401.29 173.69 L401.90 173.76 L402.55 173.91 L403.13 174.04 L403.58 174.08 L403.93 174.03 L404.23 173.92 L404.50 173.79 L404.77 173.64 L405.03 173.50 L405.28 173.35 L405.54 173.19 L405.79 173.02 L406.03 172.81 L406.25 172.53 L406.45 172.13 L406.62 171.56 L406.81 170.92 L407.06 170.36 L407.37 169.97 L407.73 169.73 L408.11 169.59 L408.50 169.51 L408.90 169.46 L409.30 169.45 L409.70 169.46 L410.10 169.51 L410.49 169.59 L410.87 169.73 L411.23 169.97 L411.54 170.36 L411.79 170.92 L411.98 171.56 L412.15 172.13 L412.35 172.53 L412.57 172.81 L412.81 173.02 L413.06 173.19 L413.32 173.35 L413.57 173.50 L413.83 173.64 L414.10 173.79 L414.37 173.92 L414.67 174.03 L415.02 174.08 L415.47 174.04 L416.05 173.91 L416.70 173.76 L417.31 173.69 L417.80 173.77 L418.19 173.96 L418.50 174.21 L418.77 174.51 L419.00 174.84 L419.22 175.18 L419.40 175.53 L419.57 175.89 L419.69 176.27 L419.76 176.67 L419.73 177.10 L419.55 177.57 L419.19 178.07 L418.73 178.55 L418.32 178.98 L418.07 179.35 L417.94 179.69 L417.88 180.00 L417.86 180.30 L417.85 180.60Z" stroke="#0d6fd4" stroke-width="1.700" stroke-linejoin="round"/>
<circle cx="409.300" cy="180.900" r="3.500" stroke="#0d6fd4" stroke-width="1.700"/>
<!-- TOOLBAR ICONS -->
<g stroke="#1c1c1c" stroke-width="1.5">
<!-- undo -->
<path d="M511.700 170.200 L507.400 174.500 L511.700 178.800 M507.600 174.500 H521.600 A4.650 4.650 0 0 1 521.600 183.800 H516.400"/>
<!-- redo -->
<path d="M566.800 170.200 L571.100 174.500 L566.800 178.800 M570.900 174.500 H556.900 A4.650 4.650 0 0 0 556.900 183.800 H562.100"/>
</g>
<path d="M586.700 160 V194.500" stroke="#e0e0e0" stroke-width="1"/>
<!-- pen selected -->
<circle cx="613.700" cy="177.200" r="18.100" fill="#dde9f8"/>
<g transform="translate(603.300 187.700) rotate(-43.800)">
<path d="M0 0 L6 -2.600 L11.500 -4 L15 -4.500 H23 A4.500 4.500 0 0 1 23 4.500 H15 L11.500 4 L6 2.600Z" fill="#0aa86b" stroke="#1c1c1c" stroke-width="1.500"/>
<path d="M0 0 L6 -2.600 L11.500 -4 V4 L6 2.600Z" fill="#1f8a5c" stroke="#1c1c1c" stroke-width="1.500"/>
<path d="M0 0 L3.400 -1.500 V1.500Z" fill="#1c1c1c" stroke="#1c1c1c" stroke-width="1"/>
</g>
<path d="M612.200 185.400 Q617.300 187.200 622.300 185.200" stroke="#0aa86b" stroke-width="1.600"/>
<path d="M611.600 191.800 L613.700 193.300 L615.800 191.800" stroke="#0d6fd4" stroke-width="1.200"/>
<path d="M598.400 162 L602.600 166 L600.500 167.800 V160.200 L602.600 162 L598.400 166" stroke="#0d6fd4" stroke-width="0.900"/>
<g stroke="#1c1c1c" stroke-width="1.500">
<!-- eraser -->
<g transform="translate(662.100 177) rotate(-43.500)"><rect x="-10.200" y="-4.800" width="20.400" height="9.600" rx="3.200"/><path d="M3.400 -4.800 V4.800"/></g>
<!-- highlighter -->
<path d="M716.800 167 L721.300 171.200 L710.600 184.200 L707 184.800 L703.800 186.600 L700.600 184.400 L702.600 182 L703.200 177 Z M704.800 178.800 L710.200 184"/>
<path d="M700.800 184.300 L703.700 186.400 L705 185.400" stroke-width="1.300"/>
<!-- tape -->
<circle cx="761.100" cy="177.400" r="8.300"/><circle cx="761.100" cy="177.400" r="3.300"/>
<path d="M761 185.700 H749.200 L751.400 182.700 L749.200 179.700 H752.800"/>
<!-- shapes -->
<rect x="802.600" y="168.300" width="8.600" height="8.600" rx="0.800"/><circle cx="802.200" cy="178.500" r="4.800"/>
<path d="M808.800 182.300 L817.500 177.500 V187.300Z"/>
<!-- lasso -->
<path d="M851.400 175.600 C852 178.400 854.500 180.200 857.500 180 C862 179.600 865.300 177 865.300 173.300 C865.300 169.300 861.200 166.100 856 166.100 C850.500 166.100 846.500 169.300 846.500 173.300 C846.500 179 850 182.500 853.500 184.600 L857.600 187.600" stroke-dasharray="3.100 2.200"/>
<!-- sticker -->
<path d="M915.050 176.800 A11 7.800 0 1 0 908.500 184.650 C908.200 180.600 910.600 177.200 915.050 176.800 Z"/>
<path d="M915.050 176.800 L908.500 184.650"/>
<path d="M904.20 173.70 L905.23 176.48 L908.19 176.60 L905.86 178.44 L906.67 181.30 L904.20 179.65 L901.73 181.30 L902.54 178.44 L900.21 176.60 L903.17 176.48Z" fill="#1c1c1c" stroke-width="0.600"/>
<!-- sticky notes -->
<path d="M946.900 171.600 V170.800 A2.800 2.800 0 0 1 949.700 168 H958.800 A2.800 2.800 0 0 1 961.600 170.800 V180 A2.800 2.800 0 0 1 958.800 182.800 H958.600"/>
<path d="M952.200 186.500 H946.200 A2.800 2.800 0 0 1 943.400 183.700 V174.600 A2.800 2.800 0 0 1 946.200 171.800 H956 A2.800 2.800 0 0 1 958.800 174.600 V179.800 L952.200 186.500 V181.600 A1.800 1.800 0 0 1 954 179.800 H958.800"/>
<!-- image -->
<rect x="991.800" y="169.400" width="18.400" height="15.800" rx="3"/><circle cx="997.100" cy="174.400" r="1.700"/>
<path d="M993.200 184.600 L1001.400 177.200 L1008.600 184.400 M1003.800 179.600 L1007.600 176.600 L1010 178.600"/>
<!-- text -->
<rect x="1038.800" y="170.300" width="21.400" height="14.400" rx="2.400"/>
</g>
<circle cx="1038.800" cy="177.500" r="1.900" fill="#1c1c1c"/><circle cx="1060.200" cy="177.500" r="1.900" fill="#1c1c1c"/>
<path d="M1045.200 175.200 V173.600 H1053.800 V175.200 M1049.500 173.600 V181.600 M1047.600 181.600 H1051.400" stroke="#1c1c1c" stroke-width="1.400" stroke-linecap="butt"/>
<!-- faded -->
<defs><linearGradient id="fade" x1="1088" x2="1100" gradientUnits="userSpaceOnUse"><stop offset="0" stop-color="#9a9a9a"/><stop offset="1" stop-color="#9a9a9a" stop-opacity="0.150"/></linearGradient></defs>
<path d="M1099.500 168.200 H1091.600 A3 3 0 0 0 1088.600 171.200 V183.400 A3 3 0 0 0 1091.600 186.400 H1099.500 M1088.800 178.200 C1094 178.600 1096.600 175.800 1096.200 172.200 C1095.800 169.800 1092.400 169.800 1092.200 172.600 C1092 175.800 1095 178.600 1099 176.600" stroke="url(#fade)" stroke-width="1.400"/>
<path d="M1100.800 159.600 V195.200" stroke="#dcdcdc" stroke-width="1"/>
<rect x="1108.100" y="159.200" width="36.100" height="36.300" rx="7" fill="#dbdbdb"/>
<path d="M1118.400 177.300 H1134.600" stroke="#222" stroke-width="1.300"/>
<path d="M1162.800 177.500 H1178.400" stroke="#1c1c1c" stroke-width="2.700"/>
<path d="M1208.800 177.500 H1221.600" stroke="#1c1c1c" stroke-width="5"/>
<circle cx="1263.500" cy="177.300" r="16" fill="#dadada"/><circle cx="1263.500" cy="177.300" r="11.200" fill="#0aa86b"/>
<path d="M1260.400 176.400 L1263.500 179.400 L1266.600 176.400" stroke="#fff" stroke-width="1.300"/>
<circle cx="1307.900" cy="177.300" r="11.200" fill="#bdb8d6"/>
<circle cx="1352.200" cy="177.300" r="11.200" fill="#0a6fd0"/>
<circle cx="1395.600" cy="178.800" r="9.300" stroke="#1c1c1c" stroke-width="1.400" stroke-dasharray="3.600 2.400"/>
<circle cx="1402" cy="172.400" r="5.700" fill="#f5f5f5"/><circle cx="1402" cy="172.400" r="4.800" fill="#111"/>
<path d="M1399.500 172.400 H1404.500 M1402 169.900 V174.900" stroke="#fff" stroke-width="1.500"/>


<!-- bolt, send -->
<path d="M79.800 991.600 L72.300 1000.400 L78.900 1001.700 L77.900 1007.800 L86.100 998.100 L79.300 997 Z" stroke="#4b1538" stroke-width="1.600"/>
<path d="M313.300 990.200 L304.500 998.500 L310.400 999.200 L304.800 1005.900 L315.500 997.200 L309.300 996.500 Z" stroke="#f7c774" stroke-width="0.900"/>
<path d="M456.400 991.800 L438.400 999.200 L445.100 1001.900 L449 1009.800 Z M445.100 1001.900 L456.400 991.800" stroke="#b4b4b4" stroke-width="1.400"/>
</svg>
</div></div>
</body>
</html>
